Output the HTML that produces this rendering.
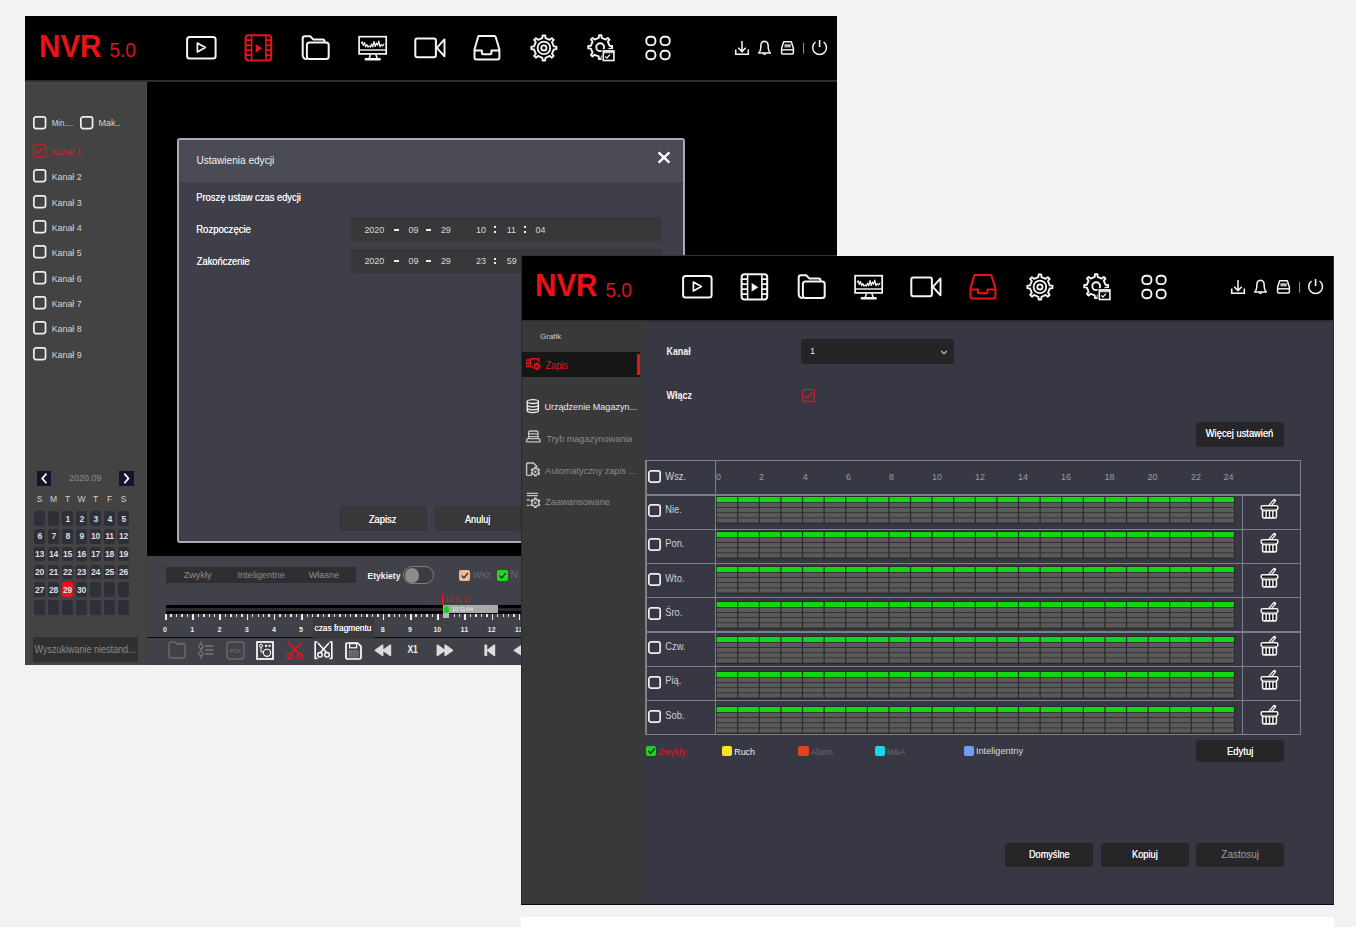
<!DOCTYPE html><html><head><meta charset="utf-8"><style>
*{margin:0;padding:0;box-sizing:border-box}
html,body{width:1356px;height:927px;overflow:hidden;background:#f2f2f2;font-family:"Liberation Sans",sans-serif}
.abs{position:absolute}
.t{position:absolute;white-space:nowrap;line-height:1}
svg{position:absolute;overflow:visible}
</style></head><body>
<div class="abs" style="left:25.00px;top:16.00px;width:812.00px;height:649.00px;background:#000;"></div>
<div class="abs" style="left:25.00px;top:16.00px;width:812.00px;height:64.00px;background:#000;"></div>
<div class="abs" style="left:25.00px;top:80.30px;width:812.00px;height:1.60px;background:#2c2c2c;"></div>
<div class="t" style="left:38.60px;top:29.81px;font-size:32.00px;color:#ec1018;font-weight:bold;transform:scale(0.925,1.0);transform-origin:0 27.09px;letter-spacing:0px">NVR</div>
<div class="t" style="left:109.40px;top:41.30px;font-size:19.14px;color:#d41820;font-weight:normal;transform:scale(1.0,1.03);transform-origin:0 16.20px;">5.0</div>
<svg style="left:25px;top:16.0px" width="813" height="64" viewBox="25 16 813 64"><rect x="187.1" y="37" width="28.5" height="21.6" rx="2.5" fill="none" stroke="#f6f6f6" stroke-width="2"/><path d="M197.4 43.1 L205.3 47.6 L197.4 52.0 Z" fill="none" stroke="#f6f6f6" stroke-width="1.7" stroke-linejoin="round"/><rect x="245.6" y="35.2" width="25.6" height="25.3" rx="3" fill="none" stroke="#e8141c" stroke-width="2"/><path d="M251.6 35.2 V60.5 M265.9 35.2 V60.5" stroke="#e8141c" stroke-width="1.6"/><path d="M245.6 40.1 H251.6 M265.9 40.1 H271.2" stroke="#e8141c" stroke-width="1.6"/><path d="M245.6 45.1 H251.6 M265.9 45.1 H271.2" stroke="#e8141c" stroke-width="1.6"/><path d="M245.6 50.1 H251.6 M265.9 50.1 H271.2" stroke="#e8141c" stroke-width="1.6"/><path d="M245.6 55.1 H251.6 M265.9 55.1 H271.2" stroke="#e8141c" stroke-width="1.6"/><path d="M255.6 43.9 L262.3 48.3 L255.6 52.8 Z" fill="#e8141c"/><path d="M306.9 59.1 Q302.7 59.1 302.7 55 V38.6 Q302.7 36.3 305 36.3 H310.2 L313.2 39.4 H322.4 Q324.6 39.4 324.6 41.5 V42.6" fill="none" stroke="#f6f6f6" stroke-width="2" stroke-linejoin="round"/><rect x="306.9" y="42.6" width="21.8" height="16.5" rx="2.5" fill="none" stroke="#f6f6f6" stroke-width="2"/><rect x="359.1" y="36.7" width="27.1" height="17.2" fill="none" stroke="#f6f6f6" stroke-width="1.7"/><path d="M359.1 50 H386.2" stroke="#f6f6f6" stroke-width="1.4"/><path d="M370.6 54.5 L369.2 58.3 M375.8 54.5 L377.2 58.3" stroke="#f6f6f6" stroke-width="1.5"/><rect x="364.6" y="58" width="16.2" height="2.6" rx="1.3" fill="#f6f6f6"/><path d="M361 43.5 L362.3 41.8 L363.3 45.5 L364.5 42.5 L365.6 46.8 L366.8 44.5 L368 47.2 L369.3 45.8 L370.5 47 L371.6 44 L372.8 46.8 L374 41.5 L375.2 46.5 L376.5 43 L377.6 45.3 L378.8 41 L380 46.8 L381.2 44.5 L382.4 46 L384.2 43.8" fill="none" stroke="#f6f6f6" stroke-width="1.2" stroke-linejoin="round"/><rect x="415.3" y="38.4" width="20.6" height="18.9" rx="2" fill="none" stroke="#f6f6f6" stroke-width="2"/><path d="M436.8 47.8 L444.5 39.4 V56.3 Z" fill="none" stroke="#f6f6f6" stroke-width="1.9" stroke-linejoin="round"/><path d="M478.4 36 H494.4 Q495.4 36 495.7 37 L499.4 49.5 V57.4 Q499.4 59.4 497.4 59.4 H476.5 Q474.5 59.4 474.5 57.4 V49.5 L478.1 37 Q478.4 36 479.4 36 Z" fill="none" stroke="#f6f6f6" stroke-width="2" stroke-linejoin="round"/><path d="M474.5 50.4 H481.9 V53.2 Q481.9 54.3 483 54.3 H490.3 Q491.4 54.3 491.4 53.2 V50.4 H499.4" fill="none" stroke="#f6f6f6" stroke-width="2" stroke-linejoin="round"/><path d="M542.34 38.02 L542.62 35.37 L545.18 35.37 L545.46 38.02 L549.78 39.81 L551.86 38.13 L553.67 39.94 L551.99 42.02 L553.78 46.34 L556.43 46.62 L556.43 49.18 L553.78 49.46 L551.99 53.78 L553.67 55.86 L551.86 57.67 L549.78 55.99 L545.46 57.78 L545.18 60.43 L542.62 60.43 L542.34 57.78 L538.02 55.99 L535.94 57.67 L534.13 55.86 L535.81 53.78 L534.02 49.46 L531.37 49.18 L531.37 46.62 L534.02 46.34 L535.81 42.02 L534.13 39.94 L535.94 38.13 L538.02 39.81 Z" fill="none" stroke="#f6f6f6" stroke-width="1.9" stroke-linejoin="round"/><circle cx="543.9" cy="47.9" r="6.3" fill="none" stroke="#f6f6f6" stroke-width="1.8"/><circle cx="543.9" cy="47.9" r="2.6" fill="none" stroke="#f6f6f6" stroke-width="1.8"/><path d="M598.73 37.92 L598.98 35.26 L601.42 35.26 L601.67 37.92 L605.73 39.60 L607.78 37.89 L609.51 39.62 L607.80 41.67 L609.48 45.73 L612.14 45.98 L612.14 48.42 L609.48 48.67 L607.80 52.73 L609.51 54.78 L607.78 56.51 L605.73 54.80 L601.67 56.48 L601.42 59.14 L598.98 59.14 L598.73 56.48 L594.67 54.80 L592.62 56.51 L590.89 54.78 L592.60 52.73 L590.92 48.67 L588.26 48.42 L588.26 45.98 L590.92 45.73 L592.60 41.67 L590.89 39.62 L592.62 37.89 L594.67 39.60 Z" fill="none" stroke="#f6f6f6" stroke-width="1.9" stroke-linejoin="round"/><circle cx="600.2" cy="47.2" r="3.9" fill="none" stroke="#f6f6f6" stroke-width="1.9"/><rect x="601.6" y="49.2" width="15" height="13" fill="#000"/><rect x="603.3" y="50.9" width="10.6" height="9.6" fill="none" stroke="#f6f6f6" stroke-width="1.6"/><rect x="603.3" y="50.9" width="10.6" height="2.4" fill="#f6f6f6" opacity="0.8"/><path d="M605.3 56.3 L606.9 58.0 L610.0 54.6" fill="none" stroke="#f6f6f6" stroke-width="1.2"/><rect x="646.3" y="36.7" width="9.1" height="8.4" rx="3.6" fill="none" stroke="#f6f6f6" stroke-width="1.9"/><rect x="646.3" y="50.8" width="9.1" height="8.4" rx="3.6" fill="none" stroke="#f6f6f6" stroke-width="1.9"/><rect x="660.6" y="36.7" width="9.1" height="8.4" rx="3.6" fill="none" stroke="#f6f6f6" stroke-width="1.9"/><rect x="660.6" y="50.8" width="9.1" height="8.4" rx="3.6" fill="none" stroke="#f6f6f6" stroke-width="1.9"/><path d="M742 41 V51.6 M738.2 47.8 L742 51.6 L745.8 47.8" fill="none" stroke="#f6f6f6" stroke-width="1.5"/><path d="M735.7 49.4 V54.2 H748.3 V49.4" fill="none" stroke="#f6f6f6" stroke-width="1.6"/><path d="M758.6 53 Q760.6 51.2 760.8 48 V46 Q761 41.4 764.5 41.3 Q768 41.4 768.2 46 V48 Q768.4 51.2 770.4 53 Z" fill="none" stroke="#f6f6f6" stroke-width="1.5" stroke-linejoin="round"/><path d="M763 53.4 Q764.5 55.4 766 53.4" fill="none" stroke="#f6f6f6" stroke-width="1.3"/><path d="M783.7 41.8 H791.3 L793.4 48.2 V53 Q793.4 54 792.4 54 H782.6 Q781.6 54 781.6 53 V48.2 Z" fill="none" stroke="#f6f6f6" stroke-width="1.5" stroke-linejoin="round"/><path d="M781.6 49.8 H793.4" stroke="#f6f6f6" stroke-width="1.4"/><rect x="784.4" y="44.2" width="6.4" height="3.2" fill="#bbb"/><path d="M803.6 42.8 V53.7" stroke="#9a9a9a" stroke-width="1"/><path d="M815.6 42.0 A6.9 6.9 0 1 0 823.6 42.0" fill="none" stroke="#f6f6f6" stroke-width="1.5"/><path d="M819.6 40.0 V47" stroke="#f6f6f6" stroke-width="1.6"/></svg>
<div class="abs" style="left:25.00px;top:81.80px;width:122.00px;height:583.20px;background:#434343;"></div>
<div class="abs" style="left:25.00px;top:81.80px;width:122.00px;height:1.00px;background:#4e4e4e;"></div>
<div class="abs" style="left:145.80px;top:81.80px;width:1.20px;height:474.00px;background:#4c4c4c;"></div>
<svg style="left:33.20px;top:115.60px" width="13.4" height="13.4" viewBox="0 0 13.4 13.4"><rect x="0.85" y="0.85" width="11.70" height="11.70" rx="2.2" fill="none" stroke="#f0f0f0" stroke-width="1.7"/></svg>
<div class="t" style="left:51.70px;top:119.95px;font-size:7.86px;color:#d4d4d4;font-weight:normal;transform:scale(1.0,1.04);transform-origin:0 6.65px;">Min....</div>
<svg style="left:80.00px;top:115.60px" width="13.4" height="13.4" viewBox="0 0 13.4 13.4"><rect x="0.85" y="0.85" width="11.70" height="11.70" rx="2.2" fill="none" stroke="#f0f0f0" stroke-width="1.7"/></svg>
<div class="t" style="left:98.60px;top:118.98px;font-size:9.00px;color:#d4d4d4;font-weight:normal;transform:scale(1.0,1.04);transform-origin:0 7.62px;">Mak..</div>
<svg style="left:33.20px;top:144.00px" width="13.4" height="13.4" viewBox="0 0 13.4 13.4"><rect x="0.65" y="0.65" width="12.10" height="12.10" rx="2.2" fill="none" stroke="#b82530" stroke-width="1.3"/><path d="M2.95 6.43 L5.76 9.11 L10.72 3.48" fill="none" stroke="#e8141c" stroke-width="1.3"/></svg>
<div class="t" style="left:51.70px;top:147.91px;font-size:8.85px;color:#d8202a;font-weight:normal;transform:scale(1.0,1.04);transform-origin:0 7.49px;">Kanał 1</div>
<svg style="left:33.20px;top:169.35px" width="13.4" height="13.4" viewBox="0 0 13.4 13.4"><rect x="0.85" y="0.85" width="11.70" height="11.70" rx="2.2" fill="none" stroke="#f0f0f0" stroke-width="1.7"/></svg>
<div class="t" style="left:51.70px;top:173.26px;font-size:8.85px;color:#d4d4d4;font-weight:normal;transform:scale(1.0,1.04);transform-origin:0 7.49px;">Kanał 2</div>
<svg style="left:33.20px;top:194.70px" width="13.4" height="13.4" viewBox="0 0 13.4 13.4"><rect x="0.85" y="0.85" width="11.70" height="11.70" rx="2.2" fill="none" stroke="#f0f0f0" stroke-width="1.7"/></svg>
<div class="t" style="left:51.70px;top:198.61px;font-size:8.85px;color:#d4d4d4;font-weight:normal;transform:scale(1.0,1.04);transform-origin:0 7.49px;">Kanał 3</div>
<svg style="left:33.20px;top:220.05px" width="13.4" height="13.4" viewBox="0 0 13.4 13.4"><rect x="0.85" y="0.85" width="11.70" height="11.70" rx="2.2" fill="none" stroke="#f0f0f0" stroke-width="1.7"/></svg>
<div class="t" style="left:51.70px;top:223.96px;font-size:8.85px;color:#d4d4d4;font-weight:normal;transform:scale(1.0,1.04);transform-origin:0 7.49px;">Kanał 4</div>
<svg style="left:33.20px;top:245.40px" width="13.4" height="13.4" viewBox="0 0 13.4 13.4"><rect x="0.85" y="0.85" width="11.70" height="11.70" rx="2.2" fill="none" stroke="#f0f0f0" stroke-width="1.7"/></svg>
<div class="t" style="left:51.70px;top:249.31px;font-size:8.85px;color:#d4d4d4;font-weight:normal;transform:scale(1.0,1.04);transform-origin:0 7.49px;">Kanał 5</div>
<svg style="left:33.20px;top:270.75px" width="13.4" height="13.4" viewBox="0 0 13.4 13.4"><rect x="0.85" y="0.85" width="11.70" height="11.70" rx="2.2" fill="none" stroke="#f0f0f0" stroke-width="1.7"/></svg>
<div class="t" style="left:51.70px;top:274.66px;font-size:8.85px;color:#d4d4d4;font-weight:normal;transform:scale(1.0,1.04);transform-origin:0 7.49px;">Kanał 6</div>
<svg style="left:33.20px;top:296.10px" width="13.4" height="13.4" viewBox="0 0 13.4 13.4"><rect x="0.85" y="0.85" width="11.70" height="11.70" rx="2.2" fill="none" stroke="#f0f0f0" stroke-width="1.7"/></svg>
<div class="t" style="left:51.70px;top:300.01px;font-size:8.85px;color:#d4d4d4;font-weight:normal;transform:scale(1.0,1.04);transform-origin:0 7.49px;">Kanał 7</div>
<svg style="left:33.20px;top:321.45px" width="13.4" height="13.4" viewBox="0 0 13.4 13.4"><rect x="0.85" y="0.85" width="11.70" height="11.70" rx="2.2" fill="none" stroke="#f0f0f0" stroke-width="1.7"/></svg>
<div class="t" style="left:51.70px;top:325.36px;font-size:8.85px;color:#d4d4d4;font-weight:normal;transform:scale(1.0,1.04);transform-origin:0 7.49px;">Kanał 8</div>
<svg style="left:33.20px;top:346.80px" width="13.4" height="13.4" viewBox="0 0 13.4 13.4"><rect x="0.85" y="0.85" width="11.70" height="11.70" rx="2.2" fill="none" stroke="#f0f0f0" stroke-width="1.7"/></svg>
<div class="t" style="left:51.70px;top:350.71px;font-size:8.85px;color:#d4d4d4;font-weight:normal;transform:scale(1.0,1.04);transform-origin:0 7.49px;">Kanał 9</div>
<div class="abs" style="left:36.70px;top:471.20px;width:14.70px;height:14.70px;background:#14142a;"></div>
<svg style="left:36.70px;top:471.20px" width="15" height="15" viewBox="0 0 15 15"><path d="M9.4 2.6 L5.2 7.4 L9.4 12.2" fill="none" stroke="#fff" stroke-width="1.7"/></svg>
<div class="abs" style="left:119.10px;top:471.20px;width:14.70px;height:14.70px;background:#14142a;"></div>
<svg style="left:119.10px;top:471.20px" width="15" height="15" viewBox="0 0 15 15"><path d="M5.3 2.6 L9.5 7.4 L5.3 12.2" fill="none" stroke="#fff" stroke-width="1.7"/></svg>
<div class="t" style="left:69.04px;top:473.98px;font-size:9.00px;color:#8a8a8a;font-weight:normal;">2020.09</div>
<div class="t" style="left:36.77px;top:495.30px;font-size:8.50px;color:#cfcfcf;font-weight:normal;">S</div>
<div class="t" style="left:50.06px;top:495.30px;font-size:8.50px;color:#cfcfcf;font-weight:normal;">M</div>
<div class="t" style="left:65.00px;top:495.30px;font-size:8.50px;color:#cfcfcf;font-weight:normal;">T</div>
<div class="t" style="left:77.59px;top:495.30px;font-size:8.50px;color:#cfcfcf;font-weight:normal;">W</div>
<div class="t" style="left:93.00px;top:495.30px;font-size:8.50px;color:#cfcfcf;font-weight:normal;">T</div>
<div class="t" style="left:107.00px;top:495.30px;font-size:8.50px;color:#cfcfcf;font-weight:normal;">F</div>
<div class="t" style="left:120.77px;top:495.30px;font-size:8.50px;color:#cfcfcf;font-weight:normal;">S</div>
<div class="abs" style="left:34.40px;top:511.40px;width:10.80px;height:14.40px;background:#2e2f38;border-radius:2.5px"></div>
<div class="abs" style="left:48.40px;top:511.40px;width:10.80px;height:14.40px;background:#2e2f38;border-radius:2.5px"></div>
<div class="abs" style="left:62.40px;top:511.40px;width:10.80px;height:14.40px;background:#2e2f38;border-radius:2.5px"></div>
<div class="t" style="left:65.41px;top:514.62px;font-size:8.60px;color:#dedede;font-weight:bold;transform:scale(1.0,1.1);transform-origin:0 7.28px;letter-spacing:-0.3px">1</div>
<div class="abs" style="left:76.40px;top:511.40px;width:10.80px;height:14.40px;background:#2e2f38;border-radius:2.5px"></div>
<div class="t" style="left:79.41px;top:514.62px;font-size:8.60px;color:#dedede;font-weight:bold;transform:scale(1.0,1.1);transform-origin:0 7.28px;letter-spacing:-0.3px">2</div>
<div class="abs" style="left:90.40px;top:511.40px;width:10.80px;height:14.40px;background:#2e2f38;border-radius:2.5px"></div>
<div class="t" style="left:93.41px;top:514.62px;font-size:8.60px;color:#dedede;font-weight:bold;transform:scale(1.0,1.1);transform-origin:0 7.28px;letter-spacing:-0.3px">3</div>
<div class="abs" style="left:104.40px;top:511.40px;width:10.80px;height:14.40px;background:#2e2f38;border-radius:2.5px"></div>
<div class="t" style="left:107.41px;top:514.62px;font-size:8.60px;color:#dedede;font-weight:bold;transform:scale(1.0,1.1);transform-origin:0 7.28px;letter-spacing:-0.3px">4</div>
<div class="abs" style="left:118.40px;top:511.40px;width:10.80px;height:14.40px;background:#2e2f38;border-radius:2.5px"></div>
<div class="t" style="left:121.41px;top:514.62px;font-size:8.60px;color:#dedede;font-weight:bold;transform:scale(1.0,1.1);transform-origin:0 7.28px;letter-spacing:-0.3px">5</div>
<div class="abs" style="left:34.40px;top:529.15px;width:10.80px;height:14.40px;background:#2e2f38;border-radius:2.5px"></div>
<div class="t" style="left:37.41px;top:532.37px;font-size:8.60px;color:#dedede;font-weight:bold;transform:scale(1.0,1.1);transform-origin:0 7.28px;letter-spacing:-0.3px">6</div>
<div class="abs" style="left:48.40px;top:529.15px;width:10.80px;height:14.40px;background:#2e2f38;border-radius:2.5px"></div>
<div class="t" style="left:51.41px;top:532.37px;font-size:8.60px;color:#dedede;font-weight:bold;transform:scale(1.0,1.1);transform-origin:0 7.28px;letter-spacing:-0.3px">7</div>
<div class="abs" style="left:62.40px;top:529.15px;width:10.80px;height:14.40px;background:#2e2f38;border-radius:2.5px"></div>
<div class="t" style="left:65.41px;top:532.37px;font-size:8.60px;color:#dedede;font-weight:bold;transform:scale(1.0,1.1);transform-origin:0 7.28px;letter-spacing:-0.3px">8</div>
<div class="abs" style="left:76.40px;top:529.15px;width:10.80px;height:14.40px;background:#2e2f38;border-radius:2.5px"></div>
<div class="t" style="left:79.41px;top:532.37px;font-size:8.60px;color:#dedede;font-weight:bold;transform:scale(1.0,1.1);transform-origin:0 7.28px;letter-spacing:-0.3px">9</div>
<div class="abs" style="left:90.40px;top:529.15px;width:10.80px;height:14.40px;background:#2e2f38;border-radius:2.5px"></div>
<div class="t" style="left:91.02px;top:532.37px;font-size:8.60px;color:#dedede;font-weight:bold;transform:scale(1.0,1.1);transform-origin:0 7.28px;letter-spacing:-0.3px">10</div>
<div class="abs" style="left:104.40px;top:529.15px;width:10.80px;height:14.40px;background:#2e2f38;border-radius:2.5px"></div>
<div class="t" style="left:105.25px;top:532.37px;font-size:8.60px;color:#dedede;font-weight:bold;transform:scale(1.0,1.1);transform-origin:0 7.28px;letter-spacing:-0.3px">11</div>
<div class="abs" style="left:118.40px;top:529.15px;width:10.80px;height:14.40px;background:#2e2f38;border-radius:2.5px"></div>
<div class="t" style="left:119.02px;top:532.37px;font-size:8.60px;color:#dedede;font-weight:bold;transform:scale(1.0,1.1);transform-origin:0 7.28px;letter-spacing:-0.3px">12</div>
<div class="abs" style="left:34.40px;top:546.90px;width:10.80px;height:14.40px;background:#2e2f38;border-radius:2.5px"></div>
<div class="t" style="left:35.02px;top:550.12px;font-size:8.60px;color:#dedede;font-weight:bold;transform:scale(1.0,1.1);transform-origin:0 7.28px;letter-spacing:-0.3px">13</div>
<div class="abs" style="left:48.40px;top:546.90px;width:10.80px;height:14.40px;background:#2e2f38;border-radius:2.5px"></div>
<div class="t" style="left:49.02px;top:550.12px;font-size:8.60px;color:#dedede;font-weight:bold;transform:scale(1.0,1.1);transform-origin:0 7.28px;letter-spacing:-0.3px">14</div>
<div class="abs" style="left:62.40px;top:546.90px;width:10.80px;height:14.40px;background:#2e2f38;border-radius:2.5px"></div>
<div class="t" style="left:63.02px;top:550.12px;font-size:8.60px;color:#dedede;font-weight:bold;transform:scale(1.0,1.1);transform-origin:0 7.28px;letter-spacing:-0.3px">15</div>
<div class="abs" style="left:76.40px;top:546.90px;width:10.80px;height:14.40px;background:#2e2f38;border-radius:2.5px"></div>
<div class="t" style="left:77.02px;top:550.12px;font-size:8.60px;color:#dedede;font-weight:bold;transform:scale(1.0,1.1);transform-origin:0 7.28px;letter-spacing:-0.3px">16</div>
<div class="abs" style="left:90.40px;top:546.90px;width:10.80px;height:14.40px;background:#2e2f38;border-radius:2.5px"></div>
<div class="t" style="left:91.02px;top:550.12px;font-size:8.60px;color:#dedede;font-weight:bold;transform:scale(1.0,1.1);transform-origin:0 7.28px;letter-spacing:-0.3px">17</div>
<div class="abs" style="left:104.40px;top:546.90px;width:10.80px;height:14.40px;background:#2e2f38;border-radius:2.5px"></div>
<div class="t" style="left:105.02px;top:550.12px;font-size:8.60px;color:#dedede;font-weight:bold;transform:scale(1.0,1.1);transform-origin:0 7.28px;letter-spacing:-0.3px">18</div>
<div class="abs" style="left:118.40px;top:546.90px;width:10.80px;height:14.40px;background:#2e2f38;border-radius:2.5px"></div>
<div class="t" style="left:119.02px;top:550.12px;font-size:8.60px;color:#dedede;font-weight:bold;transform:scale(1.0,1.1);transform-origin:0 7.28px;letter-spacing:-0.3px">19</div>
<div class="abs" style="left:34.40px;top:564.65px;width:10.80px;height:14.40px;background:#2e2f38;border-radius:2.5px"></div>
<div class="t" style="left:35.02px;top:567.87px;font-size:8.60px;color:#dedede;font-weight:bold;transform:scale(1.0,1.1);transform-origin:0 7.28px;letter-spacing:-0.3px">20</div>
<div class="abs" style="left:48.40px;top:564.65px;width:10.80px;height:14.40px;background:#2e2f38;border-radius:2.5px"></div>
<div class="t" style="left:49.02px;top:567.87px;font-size:8.60px;color:#dedede;font-weight:bold;transform:scale(1.0,1.1);transform-origin:0 7.28px;letter-spacing:-0.3px">21</div>
<div class="abs" style="left:62.40px;top:564.65px;width:10.80px;height:14.40px;background:#2e2f38;border-radius:2.5px"></div>
<div class="t" style="left:63.02px;top:567.87px;font-size:8.60px;color:#dedede;font-weight:bold;transform:scale(1.0,1.1);transform-origin:0 7.28px;letter-spacing:-0.3px">22</div>
<div class="abs" style="left:76.40px;top:564.65px;width:10.80px;height:14.40px;background:#2e2f38;border-radius:2.5px"></div>
<div class="t" style="left:77.02px;top:567.87px;font-size:8.60px;color:#dedede;font-weight:bold;transform:scale(1.0,1.1);transform-origin:0 7.28px;letter-spacing:-0.3px">23</div>
<div class="abs" style="left:90.40px;top:564.65px;width:10.80px;height:14.40px;background:#2e2f38;border-radius:2.5px"></div>
<div class="t" style="left:91.02px;top:567.87px;font-size:8.60px;color:#dedede;font-weight:bold;transform:scale(1.0,1.1);transform-origin:0 7.28px;letter-spacing:-0.3px">24</div>
<div class="abs" style="left:104.40px;top:564.65px;width:10.80px;height:14.40px;background:#2e2f38;border-radius:2.5px"></div>
<div class="t" style="left:105.02px;top:567.87px;font-size:8.60px;color:#dedede;font-weight:bold;transform:scale(1.0,1.1);transform-origin:0 7.28px;letter-spacing:-0.3px">25</div>
<div class="abs" style="left:118.40px;top:564.65px;width:10.80px;height:14.40px;background:#2e2f38;border-radius:2.5px"></div>
<div class="t" style="left:119.02px;top:567.87px;font-size:8.60px;color:#dedede;font-weight:bold;transform:scale(1.0,1.1);transform-origin:0 7.28px;letter-spacing:-0.3px">26</div>
<div class="abs" style="left:34.40px;top:582.40px;width:10.80px;height:14.40px;background:#2e2f38;border-radius:2.5px"></div>
<div class="t" style="left:35.02px;top:585.62px;font-size:8.60px;color:#dedede;font-weight:bold;transform:scale(1.0,1.1);transform-origin:0 7.28px;letter-spacing:-0.3px">27</div>
<div class="abs" style="left:48.40px;top:582.40px;width:10.80px;height:14.40px;background:#2e2f38;border-radius:2.5px"></div>
<div class="t" style="left:49.02px;top:585.62px;font-size:8.60px;color:#dedede;font-weight:bold;transform:scale(1.0,1.1);transform-origin:0 7.28px;letter-spacing:-0.3px">28</div>
<div class="abs" style="left:62.40px;top:582.40px;width:10.80px;height:14.40px;background:#e8141c;border-radius:2.5px"></div>
<div class="t" style="left:63.02px;top:585.62px;font-size:8.60px;color:#dedede;font-weight:bold;transform:scale(1.0,1.1);transform-origin:0 7.28px;letter-spacing:-0.3px">29</div>
<div class="abs" style="left:76.40px;top:582.40px;width:10.80px;height:14.40px;background:#2e2f38;border-radius:2.5px"></div>
<div class="t" style="left:77.02px;top:585.62px;font-size:8.60px;color:#dedede;font-weight:bold;transform:scale(1.0,1.1);transform-origin:0 7.28px;letter-spacing:-0.3px">30</div>
<div class="abs" style="left:90.40px;top:582.40px;width:10.80px;height:14.40px;background:#2e2f38;border-radius:2.5px"></div>
<div class="abs" style="left:104.40px;top:582.40px;width:10.80px;height:14.40px;background:#2e2f38;border-radius:2.5px"></div>
<div class="abs" style="left:118.40px;top:582.40px;width:10.80px;height:14.40px;background:#2e2f38;border-radius:2.5px"></div>
<div class="abs" style="left:34.40px;top:600.15px;width:10.80px;height:14.40px;background:#2e2f38;border-radius:2.5px"></div>
<div class="abs" style="left:48.40px;top:600.15px;width:10.80px;height:14.40px;background:#2e2f38;border-radius:2.5px"></div>
<div class="abs" style="left:62.40px;top:600.15px;width:10.80px;height:14.40px;background:#2e2f38;border-radius:2.5px"></div>
<div class="abs" style="left:76.40px;top:600.15px;width:10.80px;height:14.40px;background:#2e2f38;border-radius:2.5px"></div>
<div class="abs" style="left:90.40px;top:600.15px;width:10.80px;height:14.40px;background:#2e2f38;border-radius:2.5px"></div>
<div class="abs" style="left:104.40px;top:600.15px;width:10.80px;height:14.40px;background:#2e2f38;border-radius:2.5px"></div>
<div class="abs" style="left:118.40px;top:600.15px;width:10.80px;height:14.40px;background:#2e2f38;border-radius:2.5px"></div>
<div class="abs" style="left:32.80px;top:636.70px;width:105.40px;height:25.00px;background:#303030;"></div>
<div class="t" style="left:34.50px;top:646.48px;font-size:9.00px;color:#8a8a8a;font-weight:normal;transform:scale(1.0,1.2);transform-origin:0 7.62px;">Wyszukiwanie niestand...</div>
<div class="abs" style="left:147.00px;top:556.00px;width:690.00px;height:109.00px;background:#414249;"></div>
<div class="abs" style="left:177.4px;top:138.4px;width:507.4px;height:404.6px;background:#3f3f49;border:2px solid #a6acb1;border-radius:3px"></div>
<div class="abs" style="left:179.20px;top:140.20px;width:503.80px;height:42.30px;background:#4a4b54;"></div>
<div class="t" style="left:196.40px;top:156.08px;font-size:10.07px;color:#f2f2f2;font-weight:normal;transform:scale(1.0,1.12);transform-origin:0 8.52px;">Ustawienia edycji</div>
<svg style="left:656.50px;top:151.00px" width="14" height="13" viewBox="0 0 14 13"><path d="M1.6 1.4 L12.4 11.6 M12.4 1.4 L1.6 11.6" stroke="#fff" stroke-width="2.4"/></svg>
<div class="t" style="left:196.20px;top:193.44px;font-size:9.40px;color:#f2f2f2;font-weight:normal;transform:scale(1.0,1.1);transform-origin:0 7.96px;text-shadow:0 0 0.5px #fff">Proszę ustaw czas edycji</div>
<div class="t" style="left:196.20px;top:225.20px;font-size:9.57px;color:#f2f2f2;font-weight:normal;transform:scale(1.0,1.1);transform-origin:0 8.10px;text-shadow:0 0 0.5px #fff">Rozpoczęcie</div>
<div class="t" style="left:196.80px;top:257.69px;font-size:9.35px;color:#f2f2f2;font-weight:normal;transform:scale(1.0,1.1);transform-origin:0 7.91px;text-shadow:0 0 0.5px #fff">Zakończenie</div>
<div class="abs" style="left:351.00px;top:217.30px;width:311.00px;height:24.60px;background:#38383b;border-radius:3px"></div>
<div class="t" style="left:364.40px;top:225.52px;font-size:8.95px;color:#d8d8d8;font-weight:normal;">2020</div>
<div class="abs" style="left:393.80px;top:229.00px;width:5.60px;height:2.00px;background:#ececec;"></div>
<div class="t" style="left:408.50px;top:225.52px;font-size:8.95px;color:#d8d8d8;font-weight:normal;">09</div>
<div class="abs" style="left:425.50px;top:229.00px;width:5.60px;height:2.00px;background:#ececec;"></div>
<div class="t" style="left:440.90px;top:225.52px;font-size:8.95px;color:#d8d8d8;font-weight:normal;">29</div>
<div class="t" style="left:476.00px;top:225.52px;font-size:8.95px;color:#d8d8d8;font-weight:normal;">10</div>
<div class="abs" style="left:494.00px;top:226.00px;width:2.00px;height:2.00px;background:#ececec;"></div>
<div class="abs" style="left:494.00px;top:231.00px;width:2.00px;height:2.00px;background:#ececec;"></div>
<div class="t" style="left:506.70px;top:225.52px;font-size:8.95px;color:#d8d8d8;font-weight:normal;">11</div>
<div class="abs" style="left:523.60px;top:226.00px;width:2.00px;height:2.00px;background:#ececec;"></div>
<div class="abs" style="left:523.60px;top:231.00px;width:2.00px;height:2.00px;background:#ececec;"></div>
<div class="t" style="left:535.60px;top:225.52px;font-size:8.95px;color:#d8d8d8;font-weight:normal;">04</div>
<div class="abs" style="left:351.00px;top:248.60px;width:311.00px;height:24.60px;background:#38383b;border-radius:3px"></div>
<div class="t" style="left:364.40px;top:257.22px;font-size:8.95px;color:#d8d8d8;font-weight:normal;">2020</div>
<div class="abs" style="left:393.80px;top:260.00px;width:5.60px;height:2.00px;background:#ececec;"></div>
<div class="t" style="left:408.50px;top:257.22px;font-size:8.95px;color:#d8d8d8;font-weight:normal;">09</div>
<div class="abs" style="left:425.50px;top:260.00px;width:5.60px;height:2.00px;background:#ececec;"></div>
<div class="t" style="left:440.90px;top:257.22px;font-size:8.95px;color:#d8d8d8;font-weight:normal;">29</div>
<div class="t" style="left:476.00px;top:257.22px;font-size:8.95px;color:#d8d8d8;font-weight:normal;">23</div>
<div class="abs" style="left:494.00px;top:258.00px;width:2.00px;height:2.00px;background:#ececec;"></div>
<div class="abs" style="left:494.00px;top:262.00px;width:2.00px;height:2.00px;background:#ececec;"></div>
<div class="t" style="left:506.70px;top:257.22px;font-size:8.95px;color:#d8d8d8;font-weight:normal;">59</div>
<div class="abs" style="left:523.60px;top:258.00px;width:2.00px;height:2.00px;background:#ececec;"></div>
<div class="abs" style="left:523.60px;top:262.00px;width:2.00px;height:2.00px;background:#ececec;"></div>
<div class="t" style="left:535.60px;top:257.22px;font-size:8.95px;color:#d8d8d8;font-weight:normal;">59</div>
<div class="abs" style="left:338.70px;top:506.00px;width:88.10px;height:24.70px;background:#38383a;border-radius:3px"></div>
<div class="t" style="left:368.90px;top:515.67px;font-size:9.37px;color:#f2f2f2;font-weight:normal;transform:scale(1.0,1.1);transform-origin:0 7.93px;text-shadow:0 0 0.5px #fff">Zapisz</div>
<div class="abs" style="left:433.70px;top:506.00px;width:88.10px;height:24.70px;background:#38383a;border-radius:3px"></div>
<div class="t" style="left:465.00px;top:515.86px;font-size:9.14px;color:#f2f2f2;font-weight:normal;transform:scale(1.0,1.1);transform-origin:0 7.74px;text-shadow:0 0 0.5px #fff">Anuluj</div>
<div class="abs" style="left:166.20px;top:567.20px;width:189.50px;height:15.50px;background:#2f2f33;"></div>
<div class="t" style="left:183.70px;top:570.97px;font-size:9.13px;color:#8c8c8c;font-weight:normal;transform:scale(1.0,1.08);transform-origin:0 7.73px;">Zwykły</div>
<div class="t" style="left:237.40px;top:570.92px;font-size:9.19px;color:#8c8c8c;font-weight:normal;transform:scale(1.0,1.08);transform-origin:0 7.78px;">Inteligentne</div>
<div class="t" style="left:308.70px;top:570.96px;font-size:9.15px;color:#8c8c8c;font-weight:normal;transform:scale(1.0,1.08);transform-origin:0 7.74px;">Własne</div>
<div class="t" style="left:367.50px;top:571.72px;font-size:8.60px;color:#f4f4f4;font-weight:bold;transform:scale(1.0,1.15);transform-origin:0 7.28px;">Etykiety</div>
<div class="abs" style="left:402.8px;top:566.4px;width:31.2px;height:17.8px;border:1.3px solid #808080;border-radius:9px;background:#3c3c42"></div>
<div class="abs" style="left:404.6px;top:568.2px;width:14.4px;height:14.4px;border-radius:50%;background:#8c8c8c"></div>
<div class="abs" style="left:459.00px;top:569.80px;width:11.20px;height:10.80px;background:#f0b896;border-radius:2px"></div>
<svg style="left:459.00px;top:569.80px" width="12" height="11" viewBox="0 0 12 11"><path d="M2.6 5.5 L4.9 7.8 L9 3" fill="none" stroke="#222" stroke-width="1.2"/></svg>
<div class="t" style="left:473.00px;top:571.15px;font-size:9.16px;color:#6a6a70;font-weight:normal;transform:scale(1.0,1.08);transform-origin:0 7.75px;">Wsz</div>
<div class="abs" style="left:497.20px;top:569.80px;width:10.80px;height:10.80px;background:#20d820;border-radius:2px"></div>
<svg style="left:497.20px;top:569.80px" width="11" height="11" viewBox="0 0 11 11"><path d="M2.4 5.5 L4.7 7.8 L8.8 3" fill="none" stroke="#222" stroke-width="1.2"/></svg>
<div class="t" style="left:510.50px;top:570.11px;font-size:10.39px;color:#6a6a70;font-weight:normal;transform:scale(1.0,1.08);transform-origin:0 8.79px;">N</div>
<div class="abs" style="left:166.00px;top:605.00px;width:355.00px;height:2.60px;background:#000;"></div>
<div class="abs" style="left:166.00px;top:607.60px;width:355.00px;height:3.00px;background:#2a2a2e;"></div>
<div class="abs" style="left:166.00px;top:610.50px;width:355.00px;height:3.00px;background:#050505;"></div>
<div class="abs" style="left:164.95px;top:613.80px;width:1.60px;height:6.00px;background:#ececec;"></div>
<div class="abs" style="left:170.44px;top:613.80px;width:1.40px;height:3.30px;background:#e4e4e4;"></div>
<div class="abs" style="left:175.89px;top:613.80px;width:1.40px;height:3.30px;background:#e4e4e4;"></div>
<div class="abs" style="left:181.33px;top:613.80px;width:1.40px;height:3.30px;background:#e4e4e4;"></div>
<div class="abs" style="left:186.78px;top:613.80px;width:1.40px;height:3.30px;background:#e4e4e4;"></div>
<div class="abs" style="left:192.17px;top:613.80px;width:1.60px;height:6.00px;background:#ececec;"></div>
<div class="abs" style="left:197.66px;top:613.80px;width:1.40px;height:3.30px;background:#e4e4e4;"></div>
<div class="abs" style="left:203.11px;top:613.80px;width:1.40px;height:3.30px;background:#e4e4e4;"></div>
<div class="abs" style="left:208.55px;top:613.80px;width:1.40px;height:3.30px;background:#e4e4e4;"></div>
<div class="abs" style="left:214.00px;top:613.80px;width:1.40px;height:3.30px;background:#e4e4e4;"></div>
<div class="abs" style="left:219.39px;top:613.80px;width:1.60px;height:6.00px;background:#ececec;"></div>
<div class="abs" style="left:224.88px;top:613.80px;width:1.40px;height:3.30px;background:#e4e4e4;"></div>
<div class="abs" style="left:230.33px;top:613.80px;width:1.40px;height:3.30px;background:#e4e4e4;"></div>
<div class="abs" style="left:235.77px;top:613.80px;width:1.40px;height:3.30px;background:#e4e4e4;"></div>
<div class="abs" style="left:241.22px;top:613.80px;width:1.40px;height:3.30px;background:#e4e4e4;"></div>
<div class="abs" style="left:246.61px;top:613.80px;width:1.60px;height:6.00px;background:#ececec;"></div>
<div class="abs" style="left:252.10px;top:613.80px;width:1.40px;height:3.30px;background:#e4e4e4;"></div>
<div class="abs" style="left:257.55px;top:613.80px;width:1.40px;height:3.30px;background:#e4e4e4;"></div>
<div class="abs" style="left:262.99px;top:613.80px;width:1.40px;height:3.30px;background:#e4e4e4;"></div>
<div class="abs" style="left:268.44px;top:613.80px;width:1.40px;height:3.30px;background:#e4e4e4;"></div>
<div class="abs" style="left:273.83px;top:613.80px;width:1.60px;height:6.00px;background:#ececec;"></div>
<div class="abs" style="left:279.32px;top:613.80px;width:1.40px;height:3.30px;background:#e4e4e4;"></div>
<div class="abs" style="left:284.77px;top:613.80px;width:1.40px;height:3.30px;background:#e4e4e4;"></div>
<div class="abs" style="left:290.21px;top:613.80px;width:1.40px;height:3.30px;background:#e4e4e4;"></div>
<div class="abs" style="left:295.66px;top:613.80px;width:1.40px;height:3.30px;background:#e4e4e4;"></div>
<div class="abs" style="left:301.05px;top:613.80px;width:1.60px;height:6.00px;background:#ececec;"></div>
<div class="abs" style="left:306.54px;top:613.80px;width:1.40px;height:3.30px;background:#e4e4e4;"></div>
<div class="abs" style="left:311.99px;top:613.80px;width:1.40px;height:3.30px;background:#e4e4e4;"></div>
<div class="abs" style="left:317.43px;top:613.80px;width:1.40px;height:3.30px;background:#e4e4e4;"></div>
<div class="abs" style="left:322.88px;top:613.80px;width:1.40px;height:3.30px;background:#e4e4e4;"></div>
<div class="abs" style="left:328.27px;top:613.80px;width:1.60px;height:6.00px;background:#ececec;"></div>
<div class="abs" style="left:333.76px;top:613.80px;width:1.40px;height:3.30px;background:#e4e4e4;"></div>
<div class="abs" style="left:339.21px;top:613.80px;width:1.40px;height:3.30px;background:#e4e4e4;"></div>
<div class="abs" style="left:344.65px;top:613.80px;width:1.40px;height:3.30px;background:#e4e4e4;"></div>
<div class="abs" style="left:350.10px;top:613.80px;width:1.40px;height:3.30px;background:#e4e4e4;"></div>
<div class="abs" style="left:355.49px;top:613.80px;width:1.60px;height:6.00px;background:#ececec;"></div>
<div class="abs" style="left:360.98px;top:613.80px;width:1.40px;height:3.30px;background:#e4e4e4;"></div>
<div class="abs" style="left:366.43px;top:613.80px;width:1.40px;height:3.30px;background:#e4e4e4;"></div>
<div class="abs" style="left:371.87px;top:613.80px;width:1.40px;height:3.30px;background:#e4e4e4;"></div>
<div class="abs" style="left:377.32px;top:613.80px;width:1.40px;height:3.30px;background:#e4e4e4;"></div>
<div class="abs" style="left:382.71px;top:613.80px;width:1.60px;height:6.00px;background:#ececec;"></div>
<div class="abs" style="left:388.20px;top:613.80px;width:1.40px;height:3.30px;background:#e4e4e4;"></div>
<div class="abs" style="left:393.65px;top:613.80px;width:1.40px;height:3.30px;background:#e4e4e4;"></div>
<div class="abs" style="left:399.09px;top:613.80px;width:1.40px;height:3.30px;background:#e4e4e4;"></div>
<div class="abs" style="left:404.54px;top:613.80px;width:1.40px;height:3.30px;background:#e4e4e4;"></div>
<div class="abs" style="left:409.93px;top:613.80px;width:1.60px;height:6.00px;background:#ececec;"></div>
<div class="abs" style="left:415.42px;top:613.80px;width:1.40px;height:3.30px;background:#e4e4e4;"></div>
<div class="abs" style="left:420.87px;top:613.80px;width:1.40px;height:3.30px;background:#e4e4e4;"></div>
<div class="abs" style="left:426.31px;top:613.80px;width:1.40px;height:3.30px;background:#e4e4e4;"></div>
<div class="abs" style="left:431.76px;top:613.80px;width:1.40px;height:3.30px;background:#e4e4e4;"></div>
<div class="abs" style="left:437.15px;top:613.80px;width:1.60px;height:6.00px;background:#ececec;"></div>
<div class="abs" style="left:442.64px;top:613.80px;width:1.40px;height:3.30px;background:#e4e4e4;"></div>
<div class="abs" style="left:448.09px;top:613.80px;width:1.40px;height:3.30px;background:#e4e4e4;"></div>
<div class="abs" style="left:453.53px;top:613.80px;width:1.40px;height:3.30px;background:#e4e4e4;"></div>
<div class="abs" style="left:458.98px;top:613.80px;width:1.40px;height:3.30px;background:#e4e4e4;"></div>
<div class="abs" style="left:464.37px;top:613.80px;width:1.60px;height:6.00px;background:#ececec;"></div>
<div class="abs" style="left:469.86px;top:613.80px;width:1.40px;height:3.30px;background:#e4e4e4;"></div>
<div class="abs" style="left:475.31px;top:613.80px;width:1.40px;height:3.30px;background:#e4e4e4;"></div>
<div class="abs" style="left:480.75px;top:613.80px;width:1.40px;height:3.30px;background:#e4e4e4;"></div>
<div class="abs" style="left:486.20px;top:613.80px;width:1.40px;height:3.30px;background:#e4e4e4;"></div>
<div class="abs" style="left:491.59px;top:613.80px;width:1.60px;height:6.00px;background:#ececec;"></div>
<div class="abs" style="left:497.08px;top:613.80px;width:1.40px;height:3.30px;background:#e4e4e4;"></div>
<div class="abs" style="left:502.53px;top:613.80px;width:1.40px;height:3.30px;background:#e4e4e4;"></div>
<div class="abs" style="left:507.97px;top:613.80px;width:1.40px;height:3.30px;background:#e4e4e4;"></div>
<div class="abs" style="left:513.42px;top:613.80px;width:1.40px;height:3.30px;background:#e4e4e4;"></div>
<div class="abs" style="left:518.81px;top:613.80px;width:1.60px;height:6.00px;background:#ececec;"></div>
<div class="t" style="left:163.00px;top:626.31px;font-size:7.19px;color:#ececec;font-weight:bold;transform:scale(1.0,1.12);transform-origin:0 6.09px;">0</div>
<div class="t" style="left:190.22px;top:626.31px;font-size:7.19px;color:#ececec;font-weight:bold;transform:scale(1.0,1.12);transform-origin:0 6.09px;">1</div>
<div class="t" style="left:217.44px;top:626.31px;font-size:7.19px;color:#ececec;font-weight:bold;transform:scale(1.0,1.12);transform-origin:0 6.09px;">2</div>
<div class="t" style="left:244.66px;top:626.31px;font-size:7.19px;color:#ececec;font-weight:bold;transform:scale(1.0,1.12);transform-origin:0 6.09px;">3</div>
<div class="t" style="left:271.88px;top:626.31px;font-size:7.19px;color:#ececec;font-weight:bold;transform:scale(1.0,1.12);transform-origin:0 6.09px;">4</div>
<div class="t" style="left:299.10px;top:626.31px;font-size:7.19px;color:#ececec;font-weight:bold;transform:scale(1.0,1.12);transform-origin:0 6.09px;">5</div>
<div class="t" style="left:326.32px;top:626.31px;font-size:7.19px;color:#ececec;font-weight:bold;transform:scale(1.0,1.12);transform-origin:0 6.09px;">6</div>
<div class="t" style="left:353.54px;top:626.31px;font-size:7.19px;color:#ececec;font-weight:bold;transform:scale(1.0,1.12);transform-origin:0 6.09px;">7</div>
<div class="t" style="left:380.76px;top:626.31px;font-size:7.19px;color:#ececec;font-weight:bold;transform:scale(1.0,1.12);transform-origin:0 6.09px;">8</div>
<div class="t" style="left:407.98px;top:626.31px;font-size:7.19px;color:#ececec;font-weight:bold;transform:scale(1.0,1.12);transform-origin:0 6.09px;">9</div>
<div class="t" style="left:433.40px;top:626.62px;font-size:6.83px;color:#ececec;font-weight:bold;transform:scale(1.0,1.12);transform-origin:0 5.78px;">10</div>
<div class="t" style="left:460.62px;top:626.31px;font-size:7.19px;color:#ececec;font-weight:bold;transform:scale(1.0,1.12);transform-origin:0 6.09px;">11</div>
<div class="t" style="left:487.84px;top:626.62px;font-size:6.83px;color:#ececec;font-weight:bold;transform:scale(1.0,1.12);transform-origin:0 5.78px;">12</div>
<div class="t" style="left:515.06px;top:626.62px;font-size:6.83px;color:#ececec;font-weight:bold;transform:scale(1.0,1.12);transform-origin:0 5.78px;">13</div>
<div class="abs" style="left:443.00px;top:605.00px;width:55.00px;height:8.20px;background:#a9a9a9;"></div>
<div class="abs" style="left:443.20px;top:613.00px;width:6.00px;height:5.00px;background:#b8b8b8;"></div>
<div class="abs" style="left:444.30px;top:605.60px;width:5.00px;height:7.00px;background:#1ece1e;border-radius:2px"></div>
<div class="t" style="left:451.70px;top:607.16px;font-size:5.61px;color:#f0f0f0;font-weight:normal;">10:11:04</div>
<div class="abs" style="left:442.20px;top:594.20px;width:1.80px;height:11.00px;background:#e8141c;"></div>
<div class="t" style="left:445.00px;top:596.76px;font-size:6.55px;color:#d8141c;font-weight:normal;">10:11:10</div>
<div class="abs" style="left:147.00px;top:636.60px;width:374.00px;height:1.60px;background:#0c0c0c;"></div>
<div class="abs" style="left:313.00px;top:617.30px;width:61.00px;height:21.50px;background:#3a3a3c;"></div>
<div class="t" style="left:314.50px;top:623.94px;font-size:8.34px;color:#f4f4f4;font-weight:normal;transform:scale(1.0,1.1);transform-origin:0 7.06px;text-shadow:0 0 0.5px #fff">czas fragmentu</div>
<svg style="left:167.50px;top:641.00px" width="19" height="18" viewBox="0 0 19 18"><path d="M1 3 Q1 1 3 1 H7 L9 3 H15 Q17 3 17 5 V15 Q17 17 15 17 H3 Q1 17 1 15 Z" fill="none" stroke="#6a6a6a" stroke-width="1.4"/><path d="M9.5 2.4 H17" stroke="#6a6a6a" stroke-width="1.2"/></svg>
<svg style="left:197.50px;top:641.00px" width="17" height="19" viewBox="0 0 17 19"><line x1="3" y1="0.5" x2="3" y2="18" stroke="#777" stroke-width="1.3"/><circle cx="3" cy="5.5" r="2" fill="#3e3f45" stroke="#777" stroke-width="1.2"/><circle cx="3" cy="12.5" r="2" fill="#3e3f45" stroke="#777" stroke-width="1.2"/><path d="M7 5 H15.5 M7 9 H15.5 M7 13 H15.5" stroke="#777" stroke-width="1.4"/></svg>
<svg style="left:225.50px;top:641.00px" width="19" height="19" viewBox="0 0 19 19"><rect x="1" y="1" width="17" height="17" rx="3" fill="none" stroke="#6a6a6a" stroke-width="1.4"/><text x="9.5" y="12" font-size="5.5" text-anchor="middle" fill="#777" font-family="Liberation Sans">PCK</text></svg>
<svg style="left:255.50px;top:641.00px" width="18" height="19" viewBox="0 0 18 19"><rect x="1" y="1" width="16" height="17" fill="none" stroke="#fff" stroke-width="1.7"/><circle cx="5" cy="4.8" r="1.5" fill="none" stroke="#fff" stroke-width="1"/><rect x="9" y="3.8" width="2" height="2" fill="#fff"/><rect x="12.5" y="3.8" width="2" height="2" fill="#fff"/><path d="M5 6.5 V11 H7" fill="none" stroke="#fff" stroke-width="1"/><circle cx="11" cy="11.8" r="3.6" fill="none" stroke="#fff" stroke-width="1.1"/></svg>
<svg style="left:286.00px;top:641.00px" width="18" height="19" viewBox="0 0 18 19"><path d="M2 1 L13 12.5 M16 1 L5 12.5" stroke="#e8141c" stroke-width="1.5"/><circle cx="4" cy="15" r="2.6" fill="none" stroke="#e8141c" stroke-width="1.5"/><circle cx="14" cy="15" r="2.6" fill="none" stroke="#e8141c" stroke-width="1.5"/></svg>
<svg style="left:314.00px;top:641.00px" width="19" height="19" viewBox="0 0 19 19"><path d="M3.5 1 H1.2 V17.5 H3.5 M15.5 1 H17.8 V17.5 H15.5" fill="none" stroke="#fff" stroke-width="1.6"/><path d="M4 2 L12.5 11.5 M15 2 L6.5 11.5" stroke="#fff" stroke-width="1.5"/><circle cx="6" cy="13.8" r="2.3" fill="none" stroke="#fff" stroke-width="1.4"/><circle cx="13" cy="13.8" r="2.3" fill="none" stroke="#fff" stroke-width="1.4"/></svg>
<svg style="left:344.50px;top:641.50px" width="17" height="18" viewBox="0 0 17 18"><path d="M2.6 1 H12.6 L16 4.4 V15.4 Q16 17 14.4 17 H2.6 Q1 17 1 15.4 V2.6 Q1 1 2.6 1 Z" fill="none" stroke="#fff" stroke-width="1.7"/><rect x="4.6" y="1.6" width="7" height="4.2" fill="none" stroke="#fff" stroke-width="1.2"/><rect x="3.8" y="8.6" width="9.6" height="6.8" fill="#9a9a9a"/><path d="M3.8 10.3 H13.4 M3.8 12.3 H13.4 M3.8 14.2 H13.4 M5.8 8.6 V15.4 M7.8 8.6 V15.4 M9.8 8.6 V15.4 M11.8 8.6 V15.4" stroke="#444" stroke-width="0.7"/></svg>
<svg style="left:373.50px;top:643.50px" width="18" height="13" viewBox="0 0 18 13"><path d="M8.6 1.2 L1.4 6.3 L8.6 11.4 Z M16.4 1.2 L9.2 6.3 L16.4 11.4 Z" fill="#dcdcdc" stroke="#dcdcdc" stroke-width="1.6" stroke-linejoin="round"/></svg>
<div class="t" style="left:407.40px;top:646.40px;font-size:8.50px;color:#f0f0f0;font-weight:bold;transform:scale(1.0,1.18);transform-origin:0 7.20px;">X1</div>
<svg style="left:436.20px;top:643.50px" width="18" height="13" viewBox="0 0 18 13"><path d="M1.4 1.2 L8.6 6.3 L1.4 11.4 Z M9.2 1.2 L16.4 6.3 L9.2 11.4 Z" fill="#dcdcdc" stroke="#dcdcdc" stroke-width="1.6" stroke-linejoin="round"/></svg>
<svg style="left:484.20px;top:643.50px" width="12" height="13" viewBox="0 0 12 13"><rect x="0.4" y="0.6" width="2.8" height="11.4" rx="0.8" fill="#dcdcdc"/><path d="M10.4 1.2 L3.6 6.3 L10.4 11.4 Z" fill="#dcdcdc" stroke="#dcdcdc" stroke-width="1.6" stroke-linejoin="round"/></svg>
<svg style="left:512.50px;top:643.50px" width="10" height="13" viewBox="0 0 10 13"><path d="M9.2 1.2 L1.4 6.3 L9.2 11.4 Z" fill="#dcdcdc" stroke="#dcdcdc" stroke-width="1.6" stroke-linejoin="round"/></svg>
<div class="abs" style="left:521.00px;top:256.00px;width:813.00px;height:649.00px;background:#383845;"></div>
<div class="abs" style="left:521.00px;top:256.00px;width:813.00px;height:64.00px;background:#000;"></div>
<div class="abs" style="left:521.00px;top:320.30px;width:813.00px;height:1.60px;background:#2c2c2c;"></div>
<div class="t" style="left:534.60px;top:269.01px;font-size:32.00px;color:#ec1018;font-weight:bold;transform:scale(0.925,1.0);transform-origin:0 27.09px;letter-spacing:0px">NVR</div>
<div class="t" style="left:605.40px;top:280.50px;font-size:19.14px;color:#d41820;font-weight:normal;transform:scale(1.0,1.03);transform-origin:0 16.20px;">5.0</div>
<svg style="left:521px;top:255.2px" width="813" height="64" viewBox="25 16 813 64"><rect x="187.1" y="37" width="28.5" height="21.6" rx="2.5" fill="none" stroke="#f6f6f6" stroke-width="2"/><path d="M197.4 43.1 L205.3 47.6 L197.4 52.0 Z" fill="none" stroke="#f6f6f6" stroke-width="1.7" stroke-linejoin="round"/><rect x="245.6" y="35.2" width="25.6" height="25.3" rx="3" fill="none" stroke="#f6f6f6" stroke-width="2"/><path d="M251.6 35.2 V60.5 M265.9 35.2 V60.5" stroke="#f6f6f6" stroke-width="1.6"/><path d="M245.6 40.1 H251.6 M265.9 40.1 H271.2" stroke="#f6f6f6" stroke-width="1.6"/><path d="M245.6 45.1 H251.6 M265.9 45.1 H271.2" stroke="#f6f6f6" stroke-width="1.6"/><path d="M245.6 50.1 H251.6 M265.9 50.1 H271.2" stroke="#f6f6f6" stroke-width="1.6"/><path d="M245.6 55.1 H251.6 M265.9 55.1 H271.2" stroke="#f6f6f6" stroke-width="1.6"/><path d="M255.6 43.9 L262.3 48.3 L255.6 52.8 Z" fill="#f6f6f6"/><path d="M306.9 59.1 Q302.7 59.1 302.7 55 V38.6 Q302.7 36.3 305 36.3 H310.2 L313.2 39.4 H322.4 Q324.6 39.4 324.6 41.5 V42.6" fill="none" stroke="#f6f6f6" stroke-width="2" stroke-linejoin="round"/><rect x="306.9" y="42.6" width="21.8" height="16.5" rx="2.5" fill="none" stroke="#f6f6f6" stroke-width="2"/><rect x="359.1" y="36.7" width="27.1" height="17.2" fill="none" stroke="#f6f6f6" stroke-width="1.7"/><path d="M359.1 50 H386.2" stroke="#f6f6f6" stroke-width="1.4"/><path d="M370.6 54.5 L369.2 58.3 M375.8 54.5 L377.2 58.3" stroke="#f6f6f6" stroke-width="1.5"/><rect x="364.6" y="58" width="16.2" height="2.6" rx="1.3" fill="#f6f6f6"/><path d="M361 43.5 L362.3 41.8 L363.3 45.5 L364.5 42.5 L365.6 46.8 L366.8 44.5 L368 47.2 L369.3 45.8 L370.5 47 L371.6 44 L372.8 46.8 L374 41.5 L375.2 46.5 L376.5 43 L377.6 45.3 L378.8 41 L380 46.8 L381.2 44.5 L382.4 46 L384.2 43.8" fill="none" stroke="#f6f6f6" stroke-width="1.2" stroke-linejoin="round"/><rect x="415.3" y="38.4" width="20.6" height="18.9" rx="2" fill="none" stroke="#f6f6f6" stroke-width="2"/><path d="M436.8 47.8 L444.5 39.4 V56.3 Z" fill="none" stroke="#f6f6f6" stroke-width="1.9" stroke-linejoin="round"/><path d="M478.4 36 H494.4 Q495.4 36 495.7 37 L499.4 49.5 V57.4 Q499.4 59.4 497.4 59.4 H476.5 Q474.5 59.4 474.5 57.4 V49.5 L478.1 37 Q478.4 36 479.4 36 Z" fill="none" stroke="#e8141c" stroke-width="2" stroke-linejoin="round"/><path d="M474.5 50.4 H481.9 V53.2 Q481.9 54.3 483 54.3 H490.3 Q491.4 54.3 491.4 53.2 V50.4 H499.4" fill="none" stroke="#e8141c" stroke-width="2" stroke-linejoin="round"/><path d="M542.34 38.02 L542.62 35.37 L545.18 35.37 L545.46 38.02 L549.78 39.81 L551.86 38.13 L553.67 39.94 L551.99 42.02 L553.78 46.34 L556.43 46.62 L556.43 49.18 L553.78 49.46 L551.99 53.78 L553.67 55.86 L551.86 57.67 L549.78 55.99 L545.46 57.78 L545.18 60.43 L542.62 60.43 L542.34 57.78 L538.02 55.99 L535.94 57.67 L534.13 55.86 L535.81 53.78 L534.02 49.46 L531.37 49.18 L531.37 46.62 L534.02 46.34 L535.81 42.02 L534.13 39.94 L535.94 38.13 L538.02 39.81 Z" fill="none" stroke="#f6f6f6" stroke-width="1.9" stroke-linejoin="round"/><circle cx="543.9" cy="47.9" r="6.3" fill="none" stroke="#f6f6f6" stroke-width="1.8"/><circle cx="543.9" cy="47.9" r="2.6" fill="none" stroke="#f6f6f6" stroke-width="1.8"/><path d="M598.73 37.92 L598.98 35.26 L601.42 35.26 L601.67 37.92 L605.73 39.60 L607.78 37.89 L609.51 39.62 L607.80 41.67 L609.48 45.73 L612.14 45.98 L612.14 48.42 L609.48 48.67 L607.80 52.73 L609.51 54.78 L607.78 56.51 L605.73 54.80 L601.67 56.48 L601.42 59.14 L598.98 59.14 L598.73 56.48 L594.67 54.80 L592.62 56.51 L590.89 54.78 L592.60 52.73 L590.92 48.67 L588.26 48.42 L588.26 45.98 L590.92 45.73 L592.60 41.67 L590.89 39.62 L592.62 37.89 L594.67 39.60 Z" fill="none" stroke="#f6f6f6" stroke-width="1.9" stroke-linejoin="round"/><circle cx="600.2" cy="47.2" r="3.9" fill="none" stroke="#f6f6f6" stroke-width="1.9"/><rect x="601.6" y="49.2" width="15" height="13" fill="#000"/><rect x="603.3" y="50.9" width="10.6" height="9.6" fill="none" stroke="#f6f6f6" stroke-width="1.6"/><rect x="603.3" y="50.9" width="10.6" height="2.4" fill="#f6f6f6" opacity="0.8"/><path d="M605.3 56.3 L606.9 58.0 L610.0 54.6" fill="none" stroke="#f6f6f6" stroke-width="1.2"/><rect x="646.3" y="36.7" width="9.1" height="8.4" rx="3.6" fill="none" stroke="#f6f6f6" stroke-width="1.9"/><rect x="646.3" y="50.8" width="9.1" height="8.4" rx="3.6" fill="none" stroke="#f6f6f6" stroke-width="1.9"/><rect x="660.6" y="36.7" width="9.1" height="8.4" rx="3.6" fill="none" stroke="#f6f6f6" stroke-width="1.9"/><rect x="660.6" y="50.8" width="9.1" height="8.4" rx="3.6" fill="none" stroke="#f6f6f6" stroke-width="1.9"/><path d="M742 41 V51.6 M738.2 47.8 L742 51.6 L745.8 47.8" fill="none" stroke="#f6f6f6" stroke-width="1.5"/><path d="M735.7 49.4 V54.2 H748.3 V49.4" fill="none" stroke="#f6f6f6" stroke-width="1.6"/><path d="M758.6 53 Q760.6 51.2 760.8 48 V46 Q761 41.4 764.5 41.3 Q768 41.4 768.2 46 V48 Q768.4 51.2 770.4 53 Z" fill="none" stroke="#f6f6f6" stroke-width="1.5" stroke-linejoin="round"/><path d="M763 53.4 Q764.5 55.4 766 53.4" fill="none" stroke="#f6f6f6" stroke-width="1.3"/><path d="M783.7 41.8 H791.3 L793.4 48.2 V53 Q793.4 54 792.4 54 H782.6 Q781.6 54 781.6 53 V48.2 Z" fill="none" stroke="#f6f6f6" stroke-width="1.5" stroke-linejoin="round"/><path d="M781.6 49.8 H793.4" stroke="#f6f6f6" stroke-width="1.4"/><rect x="784.4" y="44.2" width="6.4" height="3.2" fill="#bbb"/><path d="M803.6 42.8 V53.7" stroke="#9a9a9a" stroke-width="1"/><path d="M815.6 42.0 A6.9 6.9 0 1 0 823.6 42.0" fill="none" stroke="#f6f6f6" stroke-width="1.5"/><path d="M819.6 40.0 V47" stroke="#f6f6f6" stroke-width="1.6"/></svg>
<div class="abs" style="left:1333.00px;top:256.00px;width:1.00px;height:649.00px;background:#2b2b30;"></div>
<div class="abs" style="left:521.00px;top:321.00px;width:123.50px;height:583.00px;background:#393939;"></div>
<div class="abs" style="left:521.00px;top:256.00px;width:1.20px;height:649.00px;background:#2a2a2a;"></div>
<div class="abs" style="left:521.00px;top:903.80px;width:813.00px;height:1.20px;background:#05050e;"></div>
<div class="abs" style="left:521.00px;top:917.00px;width:813.00px;height:10.00px;background:#ffffff;"></div>
<div class="abs" style="left:521.00px;top:255.00px;width:316.00px;height:1.00px;background:#333;"></div>
<div class="t" style="left:540.10px;top:332.50px;font-size:7.91px;color:#d0d0d0;font-weight:normal;transform:scale(1.0,0.95);transform-origin:0 6.70px;">Grafik</div>
<div class="abs" style="left:522.00px;top:352.30px;width:118.30px;height:24.50px;background:#161616;"></div>
<div class="abs" style="left:636.90px;top:353.80px;width:3.50px;height:21.10px;background:#e8141c;"></div>
<svg style="left:522.00px;top:352.00px" width="24" height="24" viewBox="0 0 24 24"><path d="M8.4 14.6 V6.7 H16.6 V9.8 M8.4 14.9 H10.8" fill="none" stroke="#e8141c" stroke-width="1.5"/><rect x="4.2" y="7.2" width="3.2" height="8" fill="#e8141c"/><rect x="5.2" y="8.8" width="1.4" height="1.6" fill="#181818"/><rect x="5.2" y="11.9" width="1.4" height="1.6" fill="#181818"/><path d="M14.19 11.36 L14.27 10.13 L15.33 10.13 L15.41 11.36 L16.45 11.79 L17.37 10.98 L18.12 11.73 L17.31 12.65 L17.74 13.69 L18.97 13.77 L18.97 14.83 L17.74 14.91 L17.31 15.95 L18.12 16.87 L17.37 17.62 L16.45 16.81 L15.41 17.24 L15.33 18.47 L14.27 18.47 L14.19 17.24 L13.15 16.81 L12.23 17.62 L11.48 16.87 L12.29 15.95 L11.86 14.91 L10.63 14.83 L10.63 13.77 L11.86 13.69 L12.29 12.65 L11.48 11.73 L12.23 10.98 L13.15 11.79 Z" fill="#e8141c"/><circle cx="14.8" cy="14.3" r="1.3" fill="#181818"/></svg>
<div class="t" style="left:545.40px;top:361.78px;font-size:9.24px;color:#e8141c;font-weight:normal;transform:scale(1.0,1.1);transform-origin:0 7.82px;">Zapis</div>
<svg style="left:526.00px;top:398.50px" width="14" height="15" viewBox="0 0 14 15"><ellipse cx="6.8" cy="2.6" rx="5.6" ry="1.9" fill="none" stroke="#eee" stroke-width="1.3"/><path d="M1.2 2.6 V11.6 Q1.2 13.6 6.8 13.6 Q12.4 13.6 12.4 11.6 V2.6 M1.2 5.8 Q1.2 7.8 6.8 7.8 Q12.4 7.8 12.4 5.8 M1.2 8.8 Q1.2 10.8 6.8 10.8 Q12.4 10.8 12.4 8.8" fill="none" stroke="#eee" stroke-width="1.3"/></svg>
<div class="t" style="left:544.40px;top:403.22px;font-size:9.07px;color:#ececec;font-weight:normal;transform:scale(1.0,1.08);transform-origin:0 7.68px;">Urządzenie Magazyn...</div>
<svg style="left:522.00px;top:428.00px" width="20" height="16" viewBox="0 0 20 16"><path d="M6.6 11 V4.6 Q6.6 3 8.2 3 H14.4 Q16 3 16 4.6 V11" fill="none" stroke="#c4c4c4" stroke-width="1.3"/><path d="M6.6 5.8 H16 M6.6 8.6 H16" stroke="#c4c4c4" stroke-width="1.2"/><path d="M5.2 10.6 L4.4 13.8 H18.2 L17.4 10.6 Z" fill="none" stroke="#c4c4c4" stroke-width="1.3" stroke-linejoin="round"/></svg>
<div class="t" style="left:546.40px;top:434.61px;font-size:9.08px;color:#8a8a8a;font-weight:normal;transform:scale(1.0,1.05);transform-origin:0 7.69px;">Tryb magazynowania</div>
<svg style="left:522.00px;top:458.00px" width="20" height="22" viewBox="0 0 20 22"><path d="M9.8 17.4 H5.4 Q4.6 17.4 4.6 16.6 V5.8 Q4.6 5 5.4 5 H11.4 L14.8 8.4 V9.6" fill="none" stroke="#c4c4c4" stroke-width="1.4"/><path d="M12.60 10.60 L12.77 9.45 L14.03 9.45 L14.20 10.60 L15.69 11.46 L16.77 11.03 L17.40 12.12 L16.48 12.84 L16.48 14.56 L17.40 15.28 L16.77 16.37 L15.69 15.94 L14.20 16.80 L14.03 17.95 L12.77 17.95 L12.60 16.80 L11.11 15.94 L10.03 16.37 L9.40 15.28 L10.32 14.56 L10.32 12.84 L9.40 12.12 L10.03 11.03 L11.11 11.46 Z" fill="none" stroke="#d0d0d0" stroke-width="1.3"/><circle cx="13.4" cy="13.7" r="1.2" fill="#c4c4c4"/></svg>
<div class="t" style="left:545.10px;top:466.99px;font-size:9.11px;color:#8a8a8a;font-weight:normal;transform:scale(1.0,1.05);transform-origin:0 7.71px;">Automatyczny zapis ...</div>
<svg style="left:522.00px;top:490.00px" width="20" height="20" viewBox="0 0 20 20"><path d="M4.7 3.3 H16 M4.7 5.6 H16" stroke="#c4c4c4" stroke-width="1.2"/><path d="M4.7 10 H7.6 M4.7 15.4 H7.6" stroke="#c4c4c4" stroke-width="1.3"/><path d="M12.55 9.51 L12.73 8.25 L14.07 8.25 L14.25 9.51 L15.83 10.42 L17.00 9.94 L17.68 11.11 L16.67 11.89 L16.67 13.71 L17.68 14.49 L17.00 15.66 L15.83 15.18 L14.25 16.09 L14.07 17.35 L12.73 17.35 L12.55 16.09 L10.97 15.18 L9.80 15.66 L9.12 14.49 L10.13 13.71 L10.13 11.89 L9.12 11.11 L9.80 9.94 L10.97 10.42 Z" fill="none" stroke="#d0d0d0" stroke-width="1.3"/><circle cx="13.4" cy="12.8" r="1.3" fill="#c4c4c4"/></svg>
<div class="t" style="left:545.10px;top:498.44px;font-size:9.28px;color:#8a8a8a;font-weight:normal;transform:scale(1.0,1.05);transform-origin:0 7.86px;">Zaawansowane</div>
<div class="t" style="left:666.50px;top:347.91px;font-size:8.85px;color:#f4f4f4;font-weight:bold;transform:scale(1.0,1.15);transform-origin:0 7.49px;">Kanał</div>
<div class="abs" style="left:801.00px;top:339.20px;width:153.00px;height:24.80px;background:#252527;border-radius:3px"></div>
<div class="t" style="left:810.30px;top:348.00px;font-size:8.27px;color:#f0f0f0;font-weight:normal;">1</div>
<svg style="left:940.00px;top:349.50px" width="8" height="5" viewBox="0 0 8 5"><path d="M1.2 1 L4 3.8 L6.8 1" fill="none" stroke="#ccc" stroke-width="1.1"/></svg>
<div class="t" style="left:666.50px;top:392.08px;font-size:9.00px;color:#f4f4f4;font-weight:bold;transform:scale(1.0,1.15);transform-origin:0 7.62px;">Włącz</div>
<svg style="left:801.50px;top:389.20px" width="13" height="13.4" viewBox="0 0 13 13.4"><rect x="0.7" y="0.7" width="11.6" height="11.8" rx="1.2" fill="none" stroke="#b02a32" stroke-width="1.3"/><path d="M2.8 6.3 L5.3 8.9 L10.3 3.4" fill="none" stroke="#e8141c" stroke-width="1.4"/></svg>
<div class="abs" style="left:1196.40px;top:422.20px;width:87.60px;height:24.80px;background:#262628;border-radius:3px"></div>
<div class="t" style="left:1205.80px;top:429.98px;font-size:9.36px;color:#f4f4f4;font-weight:normal;transform:scale(1.0,1.08);transform-origin:0 7.92px;text-shadow:0 0 0.5px #fff">Więcej ustawień</div>
<div class="abs" style="left:645.30px;top:459.60px;width:656.00px;height:1.40px;background:#7c808a;"></div>
<div class="abs" style="left:645.30px;top:459.60px;width:1.40px;height:275.50px;background:#7c808a;"></div>
<div class="abs" style="left:1300.00px;top:459.60px;width:1.40px;height:275.50px;background:#7c808a;"></div>
<div class="abs" style="left:714.80px;top:459.60px;width:1.30px;height:275.50px;background:#7c808a;"></div>
<svg style="left:647.80px;top:469.60px" width="13" height="13" viewBox="0 0 13 13"><rect x="0.85" y="0.85" width="11.30" height="11.30" rx="2.2" fill="none" stroke="#f0f0f0" stroke-width="1.7"/></svg>
<div class="t" style="left:665.30px;top:471.84px;font-size:9.40px;color:#d0d0d0;font-weight:normal;transform:scale(1.0,1.1);transform-origin:0 7.96px;">Wsz.</div>
<div class="t" style="left:716.00px;top:472.69px;font-size:8.99px;color:#9c9c9c;font-weight:normal;transform:scale(1.0,1.1);transform-origin:0 7.61px;">0</div>
<div class="t" style="left:759.00px;top:472.69px;font-size:8.99px;color:#9c9c9c;font-weight:normal;transform:scale(1.0,1.1);transform-origin:0 7.61px;">2</div>
<div class="t" style="left:802.80px;top:472.69px;font-size:8.99px;color:#9c9c9c;font-weight:normal;transform:scale(1.0,1.1);transform-origin:0 7.61px;">4</div>
<div class="t" style="left:846.00px;top:472.69px;font-size:8.99px;color:#9c9c9c;font-weight:normal;transform:scale(1.0,1.1);transform-origin:0 7.61px;">6</div>
<div class="t" style="left:889.00px;top:472.69px;font-size:8.99px;color:#9c9c9c;font-weight:normal;transform:scale(1.0,1.1);transform-origin:0 7.61px;">8</div>
<div class="t" style="left:932.00px;top:472.69px;font-size:8.99px;color:#9c9c9c;font-weight:normal;transform:scale(1.0,1.1);transform-origin:0 7.61px;">10</div>
<div class="t" style="left:975.00px;top:472.69px;font-size:8.99px;color:#9c9c9c;font-weight:normal;transform:scale(1.0,1.1);transform-origin:0 7.61px;">12</div>
<div class="t" style="left:1018.00px;top:472.69px;font-size:8.99px;color:#9c9c9c;font-weight:normal;transform:scale(1.0,1.1);transform-origin:0 7.61px;">14</div>
<div class="t" style="left:1061.00px;top:472.69px;font-size:8.99px;color:#9c9c9c;font-weight:normal;transform:scale(1.0,1.1);transform-origin:0 7.61px;">16</div>
<div class="t" style="left:1104.50px;top:472.69px;font-size:8.99px;color:#9c9c9c;font-weight:normal;transform:scale(1.0,1.1);transform-origin:0 7.61px;">18</div>
<div class="t" style="left:1147.50px;top:472.69px;font-size:8.99px;color:#9c9c9c;font-weight:normal;transform:scale(1.0,1.1);transform-origin:0 7.61px;">20</div>
<div class="t" style="left:1191.00px;top:472.69px;font-size:8.99px;color:#9c9c9c;font-weight:normal;transform:scale(1.0,1.1);transform-origin:0 7.61px;">22</div>
<div class="t" style="left:1223.50px;top:472.69px;font-size:8.99px;color:#9c9c9c;font-weight:normal;transform:scale(1.0,1.1);transform-origin:0 7.61px;">24</div>
<div class="abs" style="left:713.50px;top:468.00px;width:1.30px;height:16.00px;background:#393a46;"></div>
<div class="abs" style="left:714.80px;top:459.60px;width:1.30px;height:275.50px;background:#7c808a;"></div>
<div class="abs" style="left:645.30px;top:494.40px;width:656.00px;height:1.30px;background:#7c808a;"></div>
<div class="abs" style="left:1242.00px;top:494.40px;width:1.30px;height:34.30px;background:#7c808a;"></div>
<svg style="left:647.80px;top:504.20px" width="13" height="13" viewBox="0 0 13 13"><rect x="0.85" y="0.85" width="11.30" height="11.30" rx="2.2" fill="none" stroke="#f0f0f0" stroke-width="1.7"/></svg>
<div class="t" style="left:665.30px;top:506.03px;font-size:9.30px;color:#d0d0d0;font-weight:normal;transform:scale(1.0,1.1);transform-origin:0 7.87px;">Nie.</div>
<svg style="left:716.20px;top:496.00px" width="519" height="28" viewBox="0 0 519 28"><rect x="0" y="0" width="519" height="28" fill="#2a2a2c"/><rect x="0.70" y="1.0" width="20.4" height="5.0" fill="#12d812"/><rect x="0.70" y="6.80" width="20.4" height="4.35" fill="#5a5a5a"/><rect x="0.70" y="11.95" width="20.4" height="4.35" fill="#5a5a5a"/><rect x="0.70" y="17.10" width="20.4" height="4.35" fill="#5a5a5a"/><rect x="0.70" y="22.25" width="20.4" height="4.35" fill="#5a5a5a"/><rect x="22.30" y="1.0" width="20.4" height="5.0" fill="#12d812"/><rect x="22.30" y="6.80" width="20.4" height="4.35" fill="#5a5a5a"/><rect x="22.30" y="11.95" width="20.4" height="4.35" fill="#5a5a5a"/><rect x="22.30" y="17.10" width="20.4" height="4.35" fill="#5a5a5a"/><rect x="22.30" y="22.25" width="20.4" height="4.35" fill="#5a5a5a"/><rect x="43.90" y="1.0" width="20.4" height="5.0" fill="#12d812"/><rect x="43.90" y="6.80" width="20.4" height="4.35" fill="#5a5a5a"/><rect x="43.90" y="11.95" width="20.4" height="4.35" fill="#5a5a5a"/><rect x="43.90" y="17.10" width="20.4" height="4.35" fill="#5a5a5a"/><rect x="43.90" y="22.25" width="20.4" height="4.35" fill="#5a5a5a"/><rect x="65.50" y="1.0" width="20.4" height="5.0" fill="#12d812"/><rect x="65.50" y="6.80" width="20.4" height="4.35" fill="#5a5a5a"/><rect x="65.50" y="11.95" width="20.4" height="4.35" fill="#5a5a5a"/><rect x="65.50" y="17.10" width="20.4" height="4.35" fill="#5a5a5a"/><rect x="65.50" y="22.25" width="20.4" height="4.35" fill="#5a5a5a"/><rect x="87.10" y="1.0" width="20.4" height="5.0" fill="#12d812"/><rect x="87.10" y="6.80" width="20.4" height="4.35" fill="#5a5a5a"/><rect x="87.10" y="11.95" width="20.4" height="4.35" fill="#5a5a5a"/><rect x="87.10" y="17.10" width="20.4" height="4.35" fill="#5a5a5a"/><rect x="87.10" y="22.25" width="20.4" height="4.35" fill="#5a5a5a"/><rect x="108.70" y="1.0" width="20.4" height="5.0" fill="#12d812"/><rect x="108.70" y="6.80" width="20.4" height="4.35" fill="#5a5a5a"/><rect x="108.70" y="11.95" width="20.4" height="4.35" fill="#5a5a5a"/><rect x="108.70" y="17.10" width="20.4" height="4.35" fill="#5a5a5a"/><rect x="108.70" y="22.25" width="20.4" height="4.35" fill="#5a5a5a"/><rect x="130.30" y="1.0" width="20.4" height="5.0" fill="#12d812"/><rect x="130.30" y="6.80" width="20.4" height="4.35" fill="#5a5a5a"/><rect x="130.30" y="11.95" width="20.4" height="4.35" fill="#5a5a5a"/><rect x="130.30" y="17.10" width="20.4" height="4.35" fill="#5a5a5a"/><rect x="130.30" y="22.25" width="20.4" height="4.35" fill="#5a5a5a"/><rect x="151.90" y="1.0" width="20.4" height="5.0" fill="#12d812"/><rect x="151.90" y="6.80" width="20.4" height="4.35" fill="#5a5a5a"/><rect x="151.90" y="11.95" width="20.4" height="4.35" fill="#5a5a5a"/><rect x="151.90" y="17.10" width="20.4" height="4.35" fill="#5a5a5a"/><rect x="151.90" y="22.25" width="20.4" height="4.35" fill="#5a5a5a"/><rect x="173.50" y="1.0" width="20.4" height="5.0" fill="#12d812"/><rect x="173.50" y="6.80" width="20.4" height="4.35" fill="#5a5a5a"/><rect x="173.50" y="11.95" width="20.4" height="4.35" fill="#5a5a5a"/><rect x="173.50" y="17.10" width="20.4" height="4.35" fill="#5a5a5a"/><rect x="173.50" y="22.25" width="20.4" height="4.35" fill="#5a5a5a"/><rect x="195.10" y="1.0" width="20.4" height="5.0" fill="#12d812"/><rect x="195.10" y="6.80" width="20.4" height="4.35" fill="#5a5a5a"/><rect x="195.10" y="11.95" width="20.4" height="4.35" fill="#5a5a5a"/><rect x="195.10" y="17.10" width="20.4" height="4.35" fill="#5a5a5a"/><rect x="195.10" y="22.25" width="20.4" height="4.35" fill="#5a5a5a"/><rect x="216.70" y="1.0" width="20.4" height="5.0" fill="#12d812"/><rect x="216.70" y="6.80" width="20.4" height="4.35" fill="#5a5a5a"/><rect x="216.70" y="11.95" width="20.4" height="4.35" fill="#5a5a5a"/><rect x="216.70" y="17.10" width="20.4" height="4.35" fill="#5a5a5a"/><rect x="216.70" y="22.25" width="20.4" height="4.35" fill="#5a5a5a"/><rect x="238.30" y="1.0" width="20.4" height="5.0" fill="#12d812"/><rect x="238.30" y="6.80" width="20.4" height="4.35" fill="#5a5a5a"/><rect x="238.30" y="11.95" width="20.4" height="4.35" fill="#5a5a5a"/><rect x="238.30" y="17.10" width="20.4" height="4.35" fill="#5a5a5a"/><rect x="238.30" y="22.25" width="20.4" height="4.35" fill="#5a5a5a"/><rect x="259.90" y="1.0" width="20.4" height="5.0" fill="#12d812"/><rect x="259.90" y="6.80" width="20.4" height="4.35" fill="#5a5a5a"/><rect x="259.90" y="11.95" width="20.4" height="4.35" fill="#5a5a5a"/><rect x="259.90" y="17.10" width="20.4" height="4.35" fill="#5a5a5a"/><rect x="259.90" y="22.25" width="20.4" height="4.35" fill="#5a5a5a"/><rect x="281.50" y="1.0" width="20.4" height="5.0" fill="#12d812"/><rect x="281.50" y="6.80" width="20.4" height="4.35" fill="#5a5a5a"/><rect x="281.50" y="11.95" width="20.4" height="4.35" fill="#5a5a5a"/><rect x="281.50" y="17.10" width="20.4" height="4.35" fill="#5a5a5a"/><rect x="281.50" y="22.25" width="20.4" height="4.35" fill="#5a5a5a"/><rect x="303.10" y="1.0" width="20.4" height="5.0" fill="#12d812"/><rect x="303.10" y="6.80" width="20.4" height="4.35" fill="#5a5a5a"/><rect x="303.10" y="11.95" width="20.4" height="4.35" fill="#5a5a5a"/><rect x="303.10" y="17.10" width="20.4" height="4.35" fill="#5a5a5a"/><rect x="303.10" y="22.25" width="20.4" height="4.35" fill="#5a5a5a"/><rect x="324.70" y="1.0" width="20.4" height="5.0" fill="#12d812"/><rect x="324.70" y="6.80" width="20.4" height="4.35" fill="#5a5a5a"/><rect x="324.70" y="11.95" width="20.4" height="4.35" fill="#5a5a5a"/><rect x="324.70" y="17.10" width="20.4" height="4.35" fill="#5a5a5a"/><rect x="324.70" y="22.25" width="20.4" height="4.35" fill="#5a5a5a"/><rect x="346.30" y="1.0" width="20.4" height="5.0" fill="#12d812"/><rect x="346.30" y="6.80" width="20.4" height="4.35" fill="#5a5a5a"/><rect x="346.30" y="11.95" width="20.4" height="4.35" fill="#5a5a5a"/><rect x="346.30" y="17.10" width="20.4" height="4.35" fill="#5a5a5a"/><rect x="346.30" y="22.25" width="20.4" height="4.35" fill="#5a5a5a"/><rect x="367.90" y="1.0" width="20.4" height="5.0" fill="#12d812"/><rect x="367.90" y="6.80" width="20.4" height="4.35" fill="#5a5a5a"/><rect x="367.90" y="11.95" width="20.4" height="4.35" fill="#5a5a5a"/><rect x="367.90" y="17.10" width="20.4" height="4.35" fill="#5a5a5a"/><rect x="367.90" y="22.25" width="20.4" height="4.35" fill="#5a5a5a"/><rect x="389.50" y="1.0" width="20.4" height="5.0" fill="#12d812"/><rect x="389.50" y="6.80" width="20.4" height="4.35" fill="#5a5a5a"/><rect x="389.50" y="11.95" width="20.4" height="4.35" fill="#5a5a5a"/><rect x="389.50" y="17.10" width="20.4" height="4.35" fill="#5a5a5a"/><rect x="389.50" y="22.25" width="20.4" height="4.35" fill="#5a5a5a"/><rect x="411.10" y="1.0" width="20.4" height="5.0" fill="#12d812"/><rect x="411.10" y="6.80" width="20.4" height="4.35" fill="#5a5a5a"/><rect x="411.10" y="11.95" width="20.4" height="4.35" fill="#5a5a5a"/><rect x="411.10" y="17.10" width="20.4" height="4.35" fill="#5a5a5a"/><rect x="411.10" y="22.25" width="20.4" height="4.35" fill="#5a5a5a"/><rect x="432.70" y="1.0" width="20.4" height="5.0" fill="#12d812"/><rect x="432.70" y="6.80" width="20.4" height="4.35" fill="#5a5a5a"/><rect x="432.70" y="11.95" width="20.4" height="4.35" fill="#5a5a5a"/><rect x="432.70" y="17.10" width="20.4" height="4.35" fill="#5a5a5a"/><rect x="432.70" y="22.25" width="20.4" height="4.35" fill="#5a5a5a"/><rect x="454.30" y="1.0" width="20.4" height="5.0" fill="#12d812"/><rect x="454.30" y="6.80" width="20.4" height="4.35" fill="#5a5a5a"/><rect x="454.30" y="11.95" width="20.4" height="4.35" fill="#5a5a5a"/><rect x="454.30" y="17.10" width="20.4" height="4.35" fill="#5a5a5a"/><rect x="454.30" y="22.25" width="20.4" height="4.35" fill="#5a5a5a"/><rect x="475.90" y="1.0" width="20.4" height="5.0" fill="#12d812"/><rect x="475.90" y="6.80" width="20.4" height="4.35" fill="#5a5a5a"/><rect x="475.90" y="11.95" width="20.4" height="4.35" fill="#5a5a5a"/><rect x="475.90" y="17.10" width="20.4" height="4.35" fill="#5a5a5a"/><rect x="475.90" y="22.25" width="20.4" height="4.35" fill="#5a5a5a"/><rect x="497.50" y="1.0" width="20.4" height="5.0" fill="#12d812"/><rect x="497.50" y="6.80" width="20.4" height="4.35" fill="#5a5a5a"/><rect x="497.50" y="11.95" width="20.4" height="4.35" fill="#5a5a5a"/><rect x="497.50" y="17.10" width="20.4" height="4.35" fill="#5a5a5a"/><rect x="497.50" y="22.25" width="20.4" height="4.35" fill="#5a5a5a"/></svg>
<svg style="left:1255.00px;top:496.00px" width="30" height="28" viewBox="0 0 30 28"><path d="M14.2 10.6 L19.4 4.6" stroke="#f4f4f4" stroke-width="3.4" stroke-linecap="round"/><path d="M14.9 9.8 L18.7 5.4" stroke="#151515" stroke-width="1.0" stroke-linecap="round"/><rect x="6.2" y="9.8" width="16.6" height="3.8" rx="1.3" fill="#151515" stroke="#f4f4f4" stroke-width="1.5"/><path d="M7.6 13.6 V20.4 Q7.6 21.9 9.1 21.9 H19.9 Q21.4 21.9 21.4 20.4 V13.6" fill="#151515" stroke="#f4f4f4" stroke-width="1.6"/><path d="M7.6 14.7 H21.4" stroke="#f4f4f4" stroke-width="1.3"/><path d="M11.1 15 V21.2 M14.5 15 V21.2 M17.9 15 V21.2" stroke="#f4f4f4" stroke-width="1.5"/></svg>
<div class="abs" style="left:645.30px;top:528.66px;width:656.00px;height:1.30px;background:#7c808a;"></div>
<div class="abs" style="left:1242.00px;top:528.66px;width:1.30px;height:34.30px;background:#7c808a;"></div>
<svg style="left:647.80px;top:538.46px" width="13" height="13" viewBox="0 0 13 13"><rect x="0.85" y="0.85" width="11.30" height="11.30" rx="2.2" fill="none" stroke="#f0f0f0" stroke-width="1.7"/></svg>
<div class="t" style="left:665.30px;top:540.29px;font-size:9.30px;color:#d0d0d0;font-weight:normal;transform:scale(1.0,1.1);transform-origin:0 7.87px;">Pon.</div>
<svg style="left:716.20px;top:531.00px" width="519" height="28" viewBox="0 0 519 28"><rect x="0" y="0" width="519" height="28" fill="#2a2a2c"/><rect x="0.70" y="1.0" width="20.4" height="5.0" fill="#12d812"/><rect x="0.70" y="6.80" width="20.4" height="4.35" fill="#5a5a5a"/><rect x="0.70" y="11.95" width="20.4" height="4.35" fill="#5a5a5a"/><rect x="0.70" y="17.10" width="20.4" height="4.35" fill="#5a5a5a"/><rect x="0.70" y="22.25" width="20.4" height="4.35" fill="#5a5a5a"/><rect x="22.30" y="1.0" width="20.4" height="5.0" fill="#12d812"/><rect x="22.30" y="6.80" width="20.4" height="4.35" fill="#5a5a5a"/><rect x="22.30" y="11.95" width="20.4" height="4.35" fill="#5a5a5a"/><rect x="22.30" y="17.10" width="20.4" height="4.35" fill="#5a5a5a"/><rect x="22.30" y="22.25" width="20.4" height="4.35" fill="#5a5a5a"/><rect x="43.90" y="1.0" width="20.4" height="5.0" fill="#12d812"/><rect x="43.90" y="6.80" width="20.4" height="4.35" fill="#5a5a5a"/><rect x="43.90" y="11.95" width="20.4" height="4.35" fill="#5a5a5a"/><rect x="43.90" y="17.10" width="20.4" height="4.35" fill="#5a5a5a"/><rect x="43.90" y="22.25" width="20.4" height="4.35" fill="#5a5a5a"/><rect x="65.50" y="1.0" width="20.4" height="5.0" fill="#12d812"/><rect x="65.50" y="6.80" width="20.4" height="4.35" fill="#5a5a5a"/><rect x="65.50" y="11.95" width="20.4" height="4.35" fill="#5a5a5a"/><rect x="65.50" y="17.10" width="20.4" height="4.35" fill="#5a5a5a"/><rect x="65.50" y="22.25" width="20.4" height="4.35" fill="#5a5a5a"/><rect x="87.10" y="1.0" width="20.4" height="5.0" fill="#12d812"/><rect x="87.10" y="6.80" width="20.4" height="4.35" fill="#5a5a5a"/><rect x="87.10" y="11.95" width="20.4" height="4.35" fill="#5a5a5a"/><rect x="87.10" y="17.10" width="20.4" height="4.35" fill="#5a5a5a"/><rect x="87.10" y="22.25" width="20.4" height="4.35" fill="#5a5a5a"/><rect x="108.70" y="1.0" width="20.4" height="5.0" fill="#12d812"/><rect x="108.70" y="6.80" width="20.4" height="4.35" fill="#5a5a5a"/><rect x="108.70" y="11.95" width="20.4" height="4.35" fill="#5a5a5a"/><rect x="108.70" y="17.10" width="20.4" height="4.35" fill="#5a5a5a"/><rect x="108.70" y="22.25" width="20.4" height="4.35" fill="#5a5a5a"/><rect x="130.30" y="1.0" width="20.4" height="5.0" fill="#12d812"/><rect x="130.30" y="6.80" width="20.4" height="4.35" fill="#5a5a5a"/><rect x="130.30" y="11.95" width="20.4" height="4.35" fill="#5a5a5a"/><rect x="130.30" y="17.10" width="20.4" height="4.35" fill="#5a5a5a"/><rect x="130.30" y="22.25" width="20.4" height="4.35" fill="#5a5a5a"/><rect x="151.90" y="1.0" width="20.4" height="5.0" fill="#12d812"/><rect x="151.90" y="6.80" width="20.4" height="4.35" fill="#5a5a5a"/><rect x="151.90" y="11.95" width="20.4" height="4.35" fill="#5a5a5a"/><rect x="151.90" y="17.10" width="20.4" height="4.35" fill="#5a5a5a"/><rect x="151.90" y="22.25" width="20.4" height="4.35" fill="#5a5a5a"/><rect x="173.50" y="1.0" width="20.4" height="5.0" fill="#12d812"/><rect x="173.50" y="6.80" width="20.4" height="4.35" fill="#5a5a5a"/><rect x="173.50" y="11.95" width="20.4" height="4.35" fill="#5a5a5a"/><rect x="173.50" y="17.10" width="20.4" height="4.35" fill="#5a5a5a"/><rect x="173.50" y="22.25" width="20.4" height="4.35" fill="#5a5a5a"/><rect x="195.10" y="1.0" width="20.4" height="5.0" fill="#12d812"/><rect x="195.10" y="6.80" width="20.4" height="4.35" fill="#5a5a5a"/><rect x="195.10" y="11.95" width="20.4" height="4.35" fill="#5a5a5a"/><rect x="195.10" y="17.10" width="20.4" height="4.35" fill="#5a5a5a"/><rect x="195.10" y="22.25" width="20.4" height="4.35" fill="#5a5a5a"/><rect x="216.70" y="1.0" width="20.4" height="5.0" fill="#12d812"/><rect x="216.70" y="6.80" width="20.4" height="4.35" fill="#5a5a5a"/><rect x="216.70" y="11.95" width="20.4" height="4.35" fill="#5a5a5a"/><rect x="216.70" y="17.10" width="20.4" height="4.35" fill="#5a5a5a"/><rect x="216.70" y="22.25" width="20.4" height="4.35" fill="#5a5a5a"/><rect x="238.30" y="1.0" width="20.4" height="5.0" fill="#12d812"/><rect x="238.30" y="6.80" width="20.4" height="4.35" fill="#5a5a5a"/><rect x="238.30" y="11.95" width="20.4" height="4.35" fill="#5a5a5a"/><rect x="238.30" y="17.10" width="20.4" height="4.35" fill="#5a5a5a"/><rect x="238.30" y="22.25" width="20.4" height="4.35" fill="#5a5a5a"/><rect x="259.90" y="1.0" width="20.4" height="5.0" fill="#12d812"/><rect x="259.90" y="6.80" width="20.4" height="4.35" fill="#5a5a5a"/><rect x="259.90" y="11.95" width="20.4" height="4.35" fill="#5a5a5a"/><rect x="259.90" y="17.10" width="20.4" height="4.35" fill="#5a5a5a"/><rect x="259.90" y="22.25" width="20.4" height="4.35" fill="#5a5a5a"/><rect x="281.50" y="1.0" width="20.4" height="5.0" fill="#12d812"/><rect x="281.50" y="6.80" width="20.4" height="4.35" fill="#5a5a5a"/><rect x="281.50" y="11.95" width="20.4" height="4.35" fill="#5a5a5a"/><rect x="281.50" y="17.10" width="20.4" height="4.35" fill="#5a5a5a"/><rect x="281.50" y="22.25" width="20.4" height="4.35" fill="#5a5a5a"/><rect x="303.10" y="1.0" width="20.4" height="5.0" fill="#12d812"/><rect x="303.10" y="6.80" width="20.4" height="4.35" fill="#5a5a5a"/><rect x="303.10" y="11.95" width="20.4" height="4.35" fill="#5a5a5a"/><rect x="303.10" y="17.10" width="20.4" height="4.35" fill="#5a5a5a"/><rect x="303.10" y="22.25" width="20.4" height="4.35" fill="#5a5a5a"/><rect x="324.70" y="1.0" width="20.4" height="5.0" fill="#12d812"/><rect x="324.70" y="6.80" width="20.4" height="4.35" fill="#5a5a5a"/><rect x="324.70" y="11.95" width="20.4" height="4.35" fill="#5a5a5a"/><rect x="324.70" y="17.10" width="20.4" height="4.35" fill="#5a5a5a"/><rect x="324.70" y="22.25" width="20.4" height="4.35" fill="#5a5a5a"/><rect x="346.30" y="1.0" width="20.4" height="5.0" fill="#12d812"/><rect x="346.30" y="6.80" width="20.4" height="4.35" fill="#5a5a5a"/><rect x="346.30" y="11.95" width="20.4" height="4.35" fill="#5a5a5a"/><rect x="346.30" y="17.10" width="20.4" height="4.35" fill="#5a5a5a"/><rect x="346.30" y="22.25" width="20.4" height="4.35" fill="#5a5a5a"/><rect x="367.90" y="1.0" width="20.4" height="5.0" fill="#12d812"/><rect x="367.90" y="6.80" width="20.4" height="4.35" fill="#5a5a5a"/><rect x="367.90" y="11.95" width="20.4" height="4.35" fill="#5a5a5a"/><rect x="367.90" y="17.10" width="20.4" height="4.35" fill="#5a5a5a"/><rect x="367.90" y="22.25" width="20.4" height="4.35" fill="#5a5a5a"/><rect x="389.50" y="1.0" width="20.4" height="5.0" fill="#12d812"/><rect x="389.50" y="6.80" width="20.4" height="4.35" fill="#5a5a5a"/><rect x="389.50" y="11.95" width="20.4" height="4.35" fill="#5a5a5a"/><rect x="389.50" y="17.10" width="20.4" height="4.35" fill="#5a5a5a"/><rect x="389.50" y="22.25" width="20.4" height="4.35" fill="#5a5a5a"/><rect x="411.10" y="1.0" width="20.4" height="5.0" fill="#12d812"/><rect x="411.10" y="6.80" width="20.4" height="4.35" fill="#5a5a5a"/><rect x="411.10" y="11.95" width="20.4" height="4.35" fill="#5a5a5a"/><rect x="411.10" y="17.10" width="20.4" height="4.35" fill="#5a5a5a"/><rect x="411.10" y="22.25" width="20.4" height="4.35" fill="#5a5a5a"/><rect x="432.70" y="1.0" width="20.4" height="5.0" fill="#12d812"/><rect x="432.70" y="6.80" width="20.4" height="4.35" fill="#5a5a5a"/><rect x="432.70" y="11.95" width="20.4" height="4.35" fill="#5a5a5a"/><rect x="432.70" y="17.10" width="20.4" height="4.35" fill="#5a5a5a"/><rect x="432.70" y="22.25" width="20.4" height="4.35" fill="#5a5a5a"/><rect x="454.30" y="1.0" width="20.4" height="5.0" fill="#12d812"/><rect x="454.30" y="6.80" width="20.4" height="4.35" fill="#5a5a5a"/><rect x="454.30" y="11.95" width="20.4" height="4.35" fill="#5a5a5a"/><rect x="454.30" y="17.10" width="20.4" height="4.35" fill="#5a5a5a"/><rect x="454.30" y="22.25" width="20.4" height="4.35" fill="#5a5a5a"/><rect x="475.90" y="1.0" width="20.4" height="5.0" fill="#12d812"/><rect x="475.90" y="6.80" width="20.4" height="4.35" fill="#5a5a5a"/><rect x="475.90" y="11.95" width="20.4" height="4.35" fill="#5a5a5a"/><rect x="475.90" y="17.10" width="20.4" height="4.35" fill="#5a5a5a"/><rect x="475.90" y="22.25" width="20.4" height="4.35" fill="#5a5a5a"/><rect x="497.50" y="1.0" width="20.4" height="5.0" fill="#12d812"/><rect x="497.50" y="6.80" width="20.4" height="4.35" fill="#5a5a5a"/><rect x="497.50" y="11.95" width="20.4" height="4.35" fill="#5a5a5a"/><rect x="497.50" y="17.10" width="20.4" height="4.35" fill="#5a5a5a"/><rect x="497.50" y="22.25" width="20.4" height="4.35" fill="#5a5a5a"/></svg>
<svg style="left:1255.00px;top:530.26px" width="30" height="28" viewBox="0 0 30 28"><path d="M14.2 10.6 L19.4 4.6" stroke="#f4f4f4" stroke-width="3.4" stroke-linecap="round"/><path d="M14.9 9.8 L18.7 5.4" stroke="#151515" stroke-width="1.0" stroke-linecap="round"/><rect x="6.2" y="9.8" width="16.6" height="3.8" rx="1.3" fill="#151515" stroke="#f4f4f4" stroke-width="1.5"/><path d="M7.6 13.6 V20.4 Q7.6 21.9 9.1 21.9 H19.9 Q21.4 21.9 21.4 20.4 V13.6" fill="#151515" stroke="#f4f4f4" stroke-width="1.6"/><path d="M7.6 14.7 H21.4" stroke="#f4f4f4" stroke-width="1.3"/><path d="M11.1 15 V21.2 M14.5 15 V21.2 M17.9 15 V21.2" stroke="#f4f4f4" stroke-width="1.5"/></svg>
<div class="abs" style="left:645.30px;top:562.92px;width:656.00px;height:1.30px;background:#7c808a;"></div>
<div class="abs" style="left:1242.00px;top:562.92px;width:1.30px;height:34.30px;background:#7c808a;"></div>
<svg style="left:647.80px;top:572.72px" width="13" height="13" viewBox="0 0 13 13"><rect x="0.85" y="0.85" width="11.30" height="11.30" rx="2.2" fill="none" stroke="#f0f0f0" stroke-width="1.7"/></svg>
<div class="t" style="left:665.30px;top:574.55px;font-size:9.30px;color:#d0d0d0;font-weight:normal;transform:scale(1.0,1.1);transform-origin:0 7.87px;">Wto.</div>
<svg style="left:716.20px;top:566.00px" width="519" height="28" viewBox="0 0 519 28"><rect x="0" y="0" width="519" height="28" fill="#2a2a2c"/><rect x="0.70" y="1.0" width="20.4" height="5.0" fill="#12d812"/><rect x="0.70" y="6.80" width="20.4" height="4.35" fill="#5a5a5a"/><rect x="0.70" y="11.95" width="20.4" height="4.35" fill="#5a5a5a"/><rect x="0.70" y="17.10" width="20.4" height="4.35" fill="#5a5a5a"/><rect x="0.70" y="22.25" width="20.4" height="4.35" fill="#5a5a5a"/><rect x="22.30" y="1.0" width="20.4" height="5.0" fill="#12d812"/><rect x="22.30" y="6.80" width="20.4" height="4.35" fill="#5a5a5a"/><rect x="22.30" y="11.95" width="20.4" height="4.35" fill="#5a5a5a"/><rect x="22.30" y="17.10" width="20.4" height="4.35" fill="#5a5a5a"/><rect x="22.30" y="22.25" width="20.4" height="4.35" fill="#5a5a5a"/><rect x="43.90" y="1.0" width="20.4" height="5.0" fill="#12d812"/><rect x="43.90" y="6.80" width="20.4" height="4.35" fill="#5a5a5a"/><rect x="43.90" y="11.95" width="20.4" height="4.35" fill="#5a5a5a"/><rect x="43.90" y="17.10" width="20.4" height="4.35" fill="#5a5a5a"/><rect x="43.90" y="22.25" width="20.4" height="4.35" fill="#5a5a5a"/><rect x="65.50" y="1.0" width="20.4" height="5.0" fill="#12d812"/><rect x="65.50" y="6.80" width="20.4" height="4.35" fill="#5a5a5a"/><rect x="65.50" y="11.95" width="20.4" height="4.35" fill="#5a5a5a"/><rect x="65.50" y="17.10" width="20.4" height="4.35" fill="#5a5a5a"/><rect x="65.50" y="22.25" width="20.4" height="4.35" fill="#5a5a5a"/><rect x="87.10" y="1.0" width="20.4" height="5.0" fill="#12d812"/><rect x="87.10" y="6.80" width="20.4" height="4.35" fill="#5a5a5a"/><rect x="87.10" y="11.95" width="20.4" height="4.35" fill="#5a5a5a"/><rect x="87.10" y="17.10" width="20.4" height="4.35" fill="#5a5a5a"/><rect x="87.10" y="22.25" width="20.4" height="4.35" fill="#5a5a5a"/><rect x="108.70" y="1.0" width="20.4" height="5.0" fill="#12d812"/><rect x="108.70" y="6.80" width="20.4" height="4.35" fill="#5a5a5a"/><rect x="108.70" y="11.95" width="20.4" height="4.35" fill="#5a5a5a"/><rect x="108.70" y="17.10" width="20.4" height="4.35" fill="#5a5a5a"/><rect x="108.70" y="22.25" width="20.4" height="4.35" fill="#5a5a5a"/><rect x="130.30" y="1.0" width="20.4" height="5.0" fill="#12d812"/><rect x="130.30" y="6.80" width="20.4" height="4.35" fill="#5a5a5a"/><rect x="130.30" y="11.95" width="20.4" height="4.35" fill="#5a5a5a"/><rect x="130.30" y="17.10" width="20.4" height="4.35" fill="#5a5a5a"/><rect x="130.30" y="22.25" width="20.4" height="4.35" fill="#5a5a5a"/><rect x="151.90" y="1.0" width="20.4" height="5.0" fill="#12d812"/><rect x="151.90" y="6.80" width="20.4" height="4.35" fill="#5a5a5a"/><rect x="151.90" y="11.95" width="20.4" height="4.35" fill="#5a5a5a"/><rect x="151.90" y="17.10" width="20.4" height="4.35" fill="#5a5a5a"/><rect x="151.90" y="22.25" width="20.4" height="4.35" fill="#5a5a5a"/><rect x="173.50" y="1.0" width="20.4" height="5.0" fill="#12d812"/><rect x="173.50" y="6.80" width="20.4" height="4.35" fill="#5a5a5a"/><rect x="173.50" y="11.95" width="20.4" height="4.35" fill="#5a5a5a"/><rect x="173.50" y="17.10" width="20.4" height="4.35" fill="#5a5a5a"/><rect x="173.50" y="22.25" width="20.4" height="4.35" fill="#5a5a5a"/><rect x="195.10" y="1.0" width="20.4" height="5.0" fill="#12d812"/><rect x="195.10" y="6.80" width="20.4" height="4.35" fill="#5a5a5a"/><rect x="195.10" y="11.95" width="20.4" height="4.35" fill="#5a5a5a"/><rect x="195.10" y="17.10" width="20.4" height="4.35" fill="#5a5a5a"/><rect x="195.10" y="22.25" width="20.4" height="4.35" fill="#5a5a5a"/><rect x="216.70" y="1.0" width="20.4" height="5.0" fill="#12d812"/><rect x="216.70" y="6.80" width="20.4" height="4.35" fill="#5a5a5a"/><rect x="216.70" y="11.95" width="20.4" height="4.35" fill="#5a5a5a"/><rect x="216.70" y="17.10" width="20.4" height="4.35" fill="#5a5a5a"/><rect x="216.70" y="22.25" width="20.4" height="4.35" fill="#5a5a5a"/><rect x="238.30" y="1.0" width="20.4" height="5.0" fill="#12d812"/><rect x="238.30" y="6.80" width="20.4" height="4.35" fill="#5a5a5a"/><rect x="238.30" y="11.95" width="20.4" height="4.35" fill="#5a5a5a"/><rect x="238.30" y="17.10" width="20.4" height="4.35" fill="#5a5a5a"/><rect x="238.30" y="22.25" width="20.4" height="4.35" fill="#5a5a5a"/><rect x="259.90" y="1.0" width="20.4" height="5.0" fill="#12d812"/><rect x="259.90" y="6.80" width="20.4" height="4.35" fill="#5a5a5a"/><rect x="259.90" y="11.95" width="20.4" height="4.35" fill="#5a5a5a"/><rect x="259.90" y="17.10" width="20.4" height="4.35" fill="#5a5a5a"/><rect x="259.90" y="22.25" width="20.4" height="4.35" fill="#5a5a5a"/><rect x="281.50" y="1.0" width="20.4" height="5.0" fill="#12d812"/><rect x="281.50" y="6.80" width="20.4" height="4.35" fill="#5a5a5a"/><rect x="281.50" y="11.95" width="20.4" height="4.35" fill="#5a5a5a"/><rect x="281.50" y="17.10" width="20.4" height="4.35" fill="#5a5a5a"/><rect x="281.50" y="22.25" width="20.4" height="4.35" fill="#5a5a5a"/><rect x="303.10" y="1.0" width="20.4" height="5.0" fill="#12d812"/><rect x="303.10" y="6.80" width="20.4" height="4.35" fill="#5a5a5a"/><rect x="303.10" y="11.95" width="20.4" height="4.35" fill="#5a5a5a"/><rect x="303.10" y="17.10" width="20.4" height="4.35" fill="#5a5a5a"/><rect x="303.10" y="22.25" width="20.4" height="4.35" fill="#5a5a5a"/><rect x="324.70" y="1.0" width="20.4" height="5.0" fill="#12d812"/><rect x="324.70" y="6.80" width="20.4" height="4.35" fill="#5a5a5a"/><rect x="324.70" y="11.95" width="20.4" height="4.35" fill="#5a5a5a"/><rect x="324.70" y="17.10" width="20.4" height="4.35" fill="#5a5a5a"/><rect x="324.70" y="22.25" width="20.4" height="4.35" fill="#5a5a5a"/><rect x="346.30" y="1.0" width="20.4" height="5.0" fill="#12d812"/><rect x="346.30" y="6.80" width="20.4" height="4.35" fill="#5a5a5a"/><rect x="346.30" y="11.95" width="20.4" height="4.35" fill="#5a5a5a"/><rect x="346.30" y="17.10" width="20.4" height="4.35" fill="#5a5a5a"/><rect x="346.30" y="22.25" width="20.4" height="4.35" fill="#5a5a5a"/><rect x="367.90" y="1.0" width="20.4" height="5.0" fill="#12d812"/><rect x="367.90" y="6.80" width="20.4" height="4.35" fill="#5a5a5a"/><rect x="367.90" y="11.95" width="20.4" height="4.35" fill="#5a5a5a"/><rect x="367.90" y="17.10" width="20.4" height="4.35" fill="#5a5a5a"/><rect x="367.90" y="22.25" width="20.4" height="4.35" fill="#5a5a5a"/><rect x="389.50" y="1.0" width="20.4" height="5.0" fill="#12d812"/><rect x="389.50" y="6.80" width="20.4" height="4.35" fill="#5a5a5a"/><rect x="389.50" y="11.95" width="20.4" height="4.35" fill="#5a5a5a"/><rect x="389.50" y="17.10" width="20.4" height="4.35" fill="#5a5a5a"/><rect x="389.50" y="22.25" width="20.4" height="4.35" fill="#5a5a5a"/><rect x="411.10" y="1.0" width="20.4" height="5.0" fill="#12d812"/><rect x="411.10" y="6.80" width="20.4" height="4.35" fill="#5a5a5a"/><rect x="411.10" y="11.95" width="20.4" height="4.35" fill="#5a5a5a"/><rect x="411.10" y="17.10" width="20.4" height="4.35" fill="#5a5a5a"/><rect x="411.10" y="22.25" width="20.4" height="4.35" fill="#5a5a5a"/><rect x="432.70" y="1.0" width="20.4" height="5.0" fill="#12d812"/><rect x="432.70" y="6.80" width="20.4" height="4.35" fill="#5a5a5a"/><rect x="432.70" y="11.95" width="20.4" height="4.35" fill="#5a5a5a"/><rect x="432.70" y="17.10" width="20.4" height="4.35" fill="#5a5a5a"/><rect x="432.70" y="22.25" width="20.4" height="4.35" fill="#5a5a5a"/><rect x="454.30" y="1.0" width="20.4" height="5.0" fill="#12d812"/><rect x="454.30" y="6.80" width="20.4" height="4.35" fill="#5a5a5a"/><rect x="454.30" y="11.95" width="20.4" height="4.35" fill="#5a5a5a"/><rect x="454.30" y="17.10" width="20.4" height="4.35" fill="#5a5a5a"/><rect x="454.30" y="22.25" width="20.4" height="4.35" fill="#5a5a5a"/><rect x="475.90" y="1.0" width="20.4" height="5.0" fill="#12d812"/><rect x="475.90" y="6.80" width="20.4" height="4.35" fill="#5a5a5a"/><rect x="475.90" y="11.95" width="20.4" height="4.35" fill="#5a5a5a"/><rect x="475.90" y="17.10" width="20.4" height="4.35" fill="#5a5a5a"/><rect x="475.90" y="22.25" width="20.4" height="4.35" fill="#5a5a5a"/><rect x="497.50" y="1.0" width="20.4" height="5.0" fill="#12d812"/><rect x="497.50" y="6.80" width="20.4" height="4.35" fill="#5a5a5a"/><rect x="497.50" y="11.95" width="20.4" height="4.35" fill="#5a5a5a"/><rect x="497.50" y="17.10" width="20.4" height="4.35" fill="#5a5a5a"/><rect x="497.50" y="22.25" width="20.4" height="4.35" fill="#5a5a5a"/></svg>
<svg style="left:1255.00px;top:564.52px" width="30" height="28" viewBox="0 0 30 28"><path d="M14.2 10.6 L19.4 4.6" stroke="#f4f4f4" stroke-width="3.4" stroke-linecap="round"/><path d="M14.9 9.8 L18.7 5.4" stroke="#151515" stroke-width="1.0" stroke-linecap="round"/><rect x="6.2" y="9.8" width="16.6" height="3.8" rx="1.3" fill="#151515" stroke="#f4f4f4" stroke-width="1.5"/><path d="M7.6 13.6 V20.4 Q7.6 21.9 9.1 21.9 H19.9 Q21.4 21.9 21.4 20.4 V13.6" fill="#151515" stroke="#f4f4f4" stroke-width="1.6"/><path d="M7.6 14.7 H21.4" stroke="#f4f4f4" stroke-width="1.3"/><path d="M11.1 15 V21.2 M14.5 15 V21.2 M17.9 15 V21.2" stroke="#f4f4f4" stroke-width="1.5"/></svg>
<div class="abs" style="left:645.30px;top:597.18px;width:656.00px;height:1.30px;background:#7c808a;"></div>
<div class="abs" style="left:1242.00px;top:597.18px;width:1.30px;height:34.30px;background:#7c808a;"></div>
<svg style="left:647.80px;top:606.98px" width="13" height="13" viewBox="0 0 13 13"><rect x="0.85" y="0.85" width="11.30" height="11.30" rx="2.2" fill="none" stroke="#f0f0f0" stroke-width="1.7"/></svg>
<div class="t" style="left:665.30px;top:608.81px;font-size:9.30px;color:#d0d0d0;font-weight:normal;transform:scale(1.0,1.1);transform-origin:0 7.87px;">Śro.</div>
<svg style="left:716.20px;top:601.00px" width="519" height="28" viewBox="0 0 519 28"><rect x="0" y="0" width="519" height="28" fill="#2a2a2c"/><rect x="0.70" y="1.0" width="20.4" height="5.0" fill="#12d812"/><rect x="0.70" y="6.80" width="20.4" height="4.35" fill="#5a5a5a"/><rect x="0.70" y="11.95" width="20.4" height="4.35" fill="#5a5a5a"/><rect x="0.70" y="17.10" width="20.4" height="4.35" fill="#5a5a5a"/><rect x="0.70" y="22.25" width="20.4" height="4.35" fill="#5a5a5a"/><rect x="22.30" y="1.0" width="20.4" height="5.0" fill="#12d812"/><rect x="22.30" y="6.80" width="20.4" height="4.35" fill="#5a5a5a"/><rect x="22.30" y="11.95" width="20.4" height="4.35" fill="#5a5a5a"/><rect x="22.30" y="17.10" width="20.4" height="4.35" fill="#5a5a5a"/><rect x="22.30" y="22.25" width="20.4" height="4.35" fill="#5a5a5a"/><rect x="43.90" y="1.0" width="20.4" height="5.0" fill="#12d812"/><rect x="43.90" y="6.80" width="20.4" height="4.35" fill="#5a5a5a"/><rect x="43.90" y="11.95" width="20.4" height="4.35" fill="#5a5a5a"/><rect x="43.90" y="17.10" width="20.4" height="4.35" fill="#5a5a5a"/><rect x="43.90" y="22.25" width="20.4" height="4.35" fill="#5a5a5a"/><rect x="65.50" y="1.0" width="20.4" height="5.0" fill="#12d812"/><rect x="65.50" y="6.80" width="20.4" height="4.35" fill="#5a5a5a"/><rect x="65.50" y="11.95" width="20.4" height="4.35" fill="#5a5a5a"/><rect x="65.50" y="17.10" width="20.4" height="4.35" fill="#5a5a5a"/><rect x="65.50" y="22.25" width="20.4" height="4.35" fill="#5a5a5a"/><rect x="87.10" y="1.0" width="20.4" height="5.0" fill="#12d812"/><rect x="87.10" y="6.80" width="20.4" height="4.35" fill="#5a5a5a"/><rect x="87.10" y="11.95" width="20.4" height="4.35" fill="#5a5a5a"/><rect x="87.10" y="17.10" width="20.4" height="4.35" fill="#5a5a5a"/><rect x="87.10" y="22.25" width="20.4" height="4.35" fill="#5a5a5a"/><rect x="108.70" y="1.0" width="20.4" height="5.0" fill="#12d812"/><rect x="108.70" y="6.80" width="20.4" height="4.35" fill="#5a5a5a"/><rect x="108.70" y="11.95" width="20.4" height="4.35" fill="#5a5a5a"/><rect x="108.70" y="17.10" width="20.4" height="4.35" fill="#5a5a5a"/><rect x="108.70" y="22.25" width="20.4" height="4.35" fill="#5a5a5a"/><rect x="130.30" y="1.0" width="20.4" height="5.0" fill="#12d812"/><rect x="130.30" y="6.80" width="20.4" height="4.35" fill="#5a5a5a"/><rect x="130.30" y="11.95" width="20.4" height="4.35" fill="#5a5a5a"/><rect x="130.30" y="17.10" width="20.4" height="4.35" fill="#5a5a5a"/><rect x="130.30" y="22.25" width="20.4" height="4.35" fill="#5a5a5a"/><rect x="151.90" y="1.0" width="20.4" height="5.0" fill="#12d812"/><rect x="151.90" y="6.80" width="20.4" height="4.35" fill="#5a5a5a"/><rect x="151.90" y="11.95" width="20.4" height="4.35" fill="#5a5a5a"/><rect x="151.90" y="17.10" width="20.4" height="4.35" fill="#5a5a5a"/><rect x="151.90" y="22.25" width="20.4" height="4.35" fill="#5a5a5a"/><rect x="173.50" y="1.0" width="20.4" height="5.0" fill="#12d812"/><rect x="173.50" y="6.80" width="20.4" height="4.35" fill="#5a5a5a"/><rect x="173.50" y="11.95" width="20.4" height="4.35" fill="#5a5a5a"/><rect x="173.50" y="17.10" width="20.4" height="4.35" fill="#5a5a5a"/><rect x="173.50" y="22.25" width="20.4" height="4.35" fill="#5a5a5a"/><rect x="195.10" y="1.0" width="20.4" height="5.0" fill="#12d812"/><rect x="195.10" y="6.80" width="20.4" height="4.35" fill="#5a5a5a"/><rect x="195.10" y="11.95" width="20.4" height="4.35" fill="#5a5a5a"/><rect x="195.10" y="17.10" width="20.4" height="4.35" fill="#5a5a5a"/><rect x="195.10" y="22.25" width="20.4" height="4.35" fill="#5a5a5a"/><rect x="216.70" y="1.0" width="20.4" height="5.0" fill="#12d812"/><rect x="216.70" y="6.80" width="20.4" height="4.35" fill="#5a5a5a"/><rect x="216.70" y="11.95" width="20.4" height="4.35" fill="#5a5a5a"/><rect x="216.70" y="17.10" width="20.4" height="4.35" fill="#5a5a5a"/><rect x="216.70" y="22.25" width="20.4" height="4.35" fill="#5a5a5a"/><rect x="238.30" y="1.0" width="20.4" height="5.0" fill="#12d812"/><rect x="238.30" y="6.80" width="20.4" height="4.35" fill="#5a5a5a"/><rect x="238.30" y="11.95" width="20.4" height="4.35" fill="#5a5a5a"/><rect x="238.30" y="17.10" width="20.4" height="4.35" fill="#5a5a5a"/><rect x="238.30" y="22.25" width="20.4" height="4.35" fill="#5a5a5a"/><rect x="259.90" y="1.0" width="20.4" height="5.0" fill="#12d812"/><rect x="259.90" y="6.80" width="20.4" height="4.35" fill="#5a5a5a"/><rect x="259.90" y="11.95" width="20.4" height="4.35" fill="#5a5a5a"/><rect x="259.90" y="17.10" width="20.4" height="4.35" fill="#5a5a5a"/><rect x="259.90" y="22.25" width="20.4" height="4.35" fill="#5a5a5a"/><rect x="281.50" y="1.0" width="20.4" height="5.0" fill="#12d812"/><rect x="281.50" y="6.80" width="20.4" height="4.35" fill="#5a5a5a"/><rect x="281.50" y="11.95" width="20.4" height="4.35" fill="#5a5a5a"/><rect x="281.50" y="17.10" width="20.4" height="4.35" fill="#5a5a5a"/><rect x="281.50" y="22.25" width="20.4" height="4.35" fill="#5a5a5a"/><rect x="303.10" y="1.0" width="20.4" height="5.0" fill="#12d812"/><rect x="303.10" y="6.80" width="20.4" height="4.35" fill="#5a5a5a"/><rect x="303.10" y="11.95" width="20.4" height="4.35" fill="#5a5a5a"/><rect x="303.10" y="17.10" width="20.4" height="4.35" fill="#5a5a5a"/><rect x="303.10" y="22.25" width="20.4" height="4.35" fill="#5a5a5a"/><rect x="324.70" y="1.0" width="20.4" height="5.0" fill="#12d812"/><rect x="324.70" y="6.80" width="20.4" height="4.35" fill="#5a5a5a"/><rect x="324.70" y="11.95" width="20.4" height="4.35" fill="#5a5a5a"/><rect x="324.70" y="17.10" width="20.4" height="4.35" fill="#5a5a5a"/><rect x="324.70" y="22.25" width="20.4" height="4.35" fill="#5a5a5a"/><rect x="346.30" y="1.0" width="20.4" height="5.0" fill="#12d812"/><rect x="346.30" y="6.80" width="20.4" height="4.35" fill="#5a5a5a"/><rect x="346.30" y="11.95" width="20.4" height="4.35" fill="#5a5a5a"/><rect x="346.30" y="17.10" width="20.4" height="4.35" fill="#5a5a5a"/><rect x="346.30" y="22.25" width="20.4" height="4.35" fill="#5a5a5a"/><rect x="367.90" y="1.0" width="20.4" height="5.0" fill="#12d812"/><rect x="367.90" y="6.80" width="20.4" height="4.35" fill="#5a5a5a"/><rect x="367.90" y="11.95" width="20.4" height="4.35" fill="#5a5a5a"/><rect x="367.90" y="17.10" width="20.4" height="4.35" fill="#5a5a5a"/><rect x="367.90" y="22.25" width="20.4" height="4.35" fill="#5a5a5a"/><rect x="389.50" y="1.0" width="20.4" height="5.0" fill="#12d812"/><rect x="389.50" y="6.80" width="20.4" height="4.35" fill="#5a5a5a"/><rect x="389.50" y="11.95" width="20.4" height="4.35" fill="#5a5a5a"/><rect x="389.50" y="17.10" width="20.4" height="4.35" fill="#5a5a5a"/><rect x="389.50" y="22.25" width="20.4" height="4.35" fill="#5a5a5a"/><rect x="411.10" y="1.0" width="20.4" height="5.0" fill="#12d812"/><rect x="411.10" y="6.80" width="20.4" height="4.35" fill="#5a5a5a"/><rect x="411.10" y="11.95" width="20.4" height="4.35" fill="#5a5a5a"/><rect x="411.10" y="17.10" width="20.4" height="4.35" fill="#5a5a5a"/><rect x="411.10" y="22.25" width="20.4" height="4.35" fill="#5a5a5a"/><rect x="432.70" y="1.0" width="20.4" height="5.0" fill="#12d812"/><rect x="432.70" y="6.80" width="20.4" height="4.35" fill="#5a5a5a"/><rect x="432.70" y="11.95" width="20.4" height="4.35" fill="#5a5a5a"/><rect x="432.70" y="17.10" width="20.4" height="4.35" fill="#5a5a5a"/><rect x="432.70" y="22.25" width="20.4" height="4.35" fill="#5a5a5a"/><rect x="454.30" y="1.0" width="20.4" height="5.0" fill="#12d812"/><rect x="454.30" y="6.80" width="20.4" height="4.35" fill="#5a5a5a"/><rect x="454.30" y="11.95" width="20.4" height="4.35" fill="#5a5a5a"/><rect x="454.30" y="17.10" width="20.4" height="4.35" fill="#5a5a5a"/><rect x="454.30" y="22.25" width="20.4" height="4.35" fill="#5a5a5a"/><rect x="475.90" y="1.0" width="20.4" height="5.0" fill="#12d812"/><rect x="475.90" y="6.80" width="20.4" height="4.35" fill="#5a5a5a"/><rect x="475.90" y="11.95" width="20.4" height="4.35" fill="#5a5a5a"/><rect x="475.90" y="17.10" width="20.4" height="4.35" fill="#5a5a5a"/><rect x="475.90" y="22.25" width="20.4" height="4.35" fill="#5a5a5a"/><rect x="497.50" y="1.0" width="20.4" height="5.0" fill="#12d812"/><rect x="497.50" y="6.80" width="20.4" height="4.35" fill="#5a5a5a"/><rect x="497.50" y="11.95" width="20.4" height="4.35" fill="#5a5a5a"/><rect x="497.50" y="17.10" width="20.4" height="4.35" fill="#5a5a5a"/><rect x="497.50" y="22.25" width="20.4" height="4.35" fill="#5a5a5a"/></svg>
<svg style="left:1255.00px;top:598.78px" width="30" height="28" viewBox="0 0 30 28"><path d="M14.2 10.6 L19.4 4.6" stroke="#f4f4f4" stroke-width="3.4" stroke-linecap="round"/><path d="M14.9 9.8 L18.7 5.4" stroke="#151515" stroke-width="1.0" stroke-linecap="round"/><rect x="6.2" y="9.8" width="16.6" height="3.8" rx="1.3" fill="#151515" stroke="#f4f4f4" stroke-width="1.5"/><path d="M7.6 13.6 V20.4 Q7.6 21.9 9.1 21.9 H19.9 Q21.4 21.9 21.4 20.4 V13.6" fill="#151515" stroke="#f4f4f4" stroke-width="1.6"/><path d="M7.6 14.7 H21.4" stroke="#f4f4f4" stroke-width="1.3"/><path d="M11.1 15 V21.2 M14.5 15 V21.2 M17.9 15 V21.2" stroke="#f4f4f4" stroke-width="1.5"/></svg>
<div class="abs" style="left:645.30px;top:631.44px;width:656.00px;height:1.30px;background:#7c808a;"></div>
<div class="abs" style="left:1242.00px;top:631.44px;width:1.30px;height:34.30px;background:#7c808a;"></div>
<svg style="left:647.80px;top:641.24px" width="13" height="13" viewBox="0 0 13 13"><rect x="0.85" y="0.85" width="11.30" height="11.30" rx="2.2" fill="none" stroke="#f0f0f0" stroke-width="1.7"/></svg>
<div class="t" style="left:665.30px;top:643.07px;font-size:9.30px;color:#d0d0d0;font-weight:normal;transform:scale(1.0,1.1);transform-origin:0 7.87px;">Czw.</div>
<svg style="left:716.20px;top:636.00px" width="519" height="28" viewBox="0 0 519 28"><rect x="0" y="0" width="519" height="28" fill="#2a2a2c"/><rect x="0.70" y="1.0" width="20.4" height="5.0" fill="#12d812"/><rect x="0.70" y="6.80" width="20.4" height="4.35" fill="#5a5a5a"/><rect x="0.70" y="11.95" width="20.4" height="4.35" fill="#5a5a5a"/><rect x="0.70" y="17.10" width="20.4" height="4.35" fill="#5a5a5a"/><rect x="0.70" y="22.25" width="20.4" height="4.35" fill="#5a5a5a"/><rect x="22.30" y="1.0" width="20.4" height="5.0" fill="#12d812"/><rect x="22.30" y="6.80" width="20.4" height="4.35" fill="#5a5a5a"/><rect x="22.30" y="11.95" width="20.4" height="4.35" fill="#5a5a5a"/><rect x="22.30" y="17.10" width="20.4" height="4.35" fill="#5a5a5a"/><rect x="22.30" y="22.25" width="20.4" height="4.35" fill="#5a5a5a"/><rect x="43.90" y="1.0" width="20.4" height="5.0" fill="#12d812"/><rect x="43.90" y="6.80" width="20.4" height="4.35" fill="#5a5a5a"/><rect x="43.90" y="11.95" width="20.4" height="4.35" fill="#5a5a5a"/><rect x="43.90" y="17.10" width="20.4" height="4.35" fill="#5a5a5a"/><rect x="43.90" y="22.25" width="20.4" height="4.35" fill="#5a5a5a"/><rect x="65.50" y="1.0" width="20.4" height="5.0" fill="#12d812"/><rect x="65.50" y="6.80" width="20.4" height="4.35" fill="#5a5a5a"/><rect x="65.50" y="11.95" width="20.4" height="4.35" fill="#5a5a5a"/><rect x="65.50" y="17.10" width="20.4" height="4.35" fill="#5a5a5a"/><rect x="65.50" y="22.25" width="20.4" height="4.35" fill="#5a5a5a"/><rect x="87.10" y="1.0" width="20.4" height="5.0" fill="#12d812"/><rect x="87.10" y="6.80" width="20.4" height="4.35" fill="#5a5a5a"/><rect x="87.10" y="11.95" width="20.4" height="4.35" fill="#5a5a5a"/><rect x="87.10" y="17.10" width="20.4" height="4.35" fill="#5a5a5a"/><rect x="87.10" y="22.25" width="20.4" height="4.35" fill="#5a5a5a"/><rect x="108.70" y="1.0" width="20.4" height="5.0" fill="#12d812"/><rect x="108.70" y="6.80" width="20.4" height="4.35" fill="#5a5a5a"/><rect x="108.70" y="11.95" width="20.4" height="4.35" fill="#5a5a5a"/><rect x="108.70" y="17.10" width="20.4" height="4.35" fill="#5a5a5a"/><rect x="108.70" y="22.25" width="20.4" height="4.35" fill="#5a5a5a"/><rect x="130.30" y="1.0" width="20.4" height="5.0" fill="#12d812"/><rect x="130.30" y="6.80" width="20.4" height="4.35" fill="#5a5a5a"/><rect x="130.30" y="11.95" width="20.4" height="4.35" fill="#5a5a5a"/><rect x="130.30" y="17.10" width="20.4" height="4.35" fill="#5a5a5a"/><rect x="130.30" y="22.25" width="20.4" height="4.35" fill="#5a5a5a"/><rect x="151.90" y="1.0" width="20.4" height="5.0" fill="#12d812"/><rect x="151.90" y="6.80" width="20.4" height="4.35" fill="#5a5a5a"/><rect x="151.90" y="11.95" width="20.4" height="4.35" fill="#5a5a5a"/><rect x="151.90" y="17.10" width="20.4" height="4.35" fill="#5a5a5a"/><rect x="151.90" y="22.25" width="20.4" height="4.35" fill="#5a5a5a"/><rect x="173.50" y="1.0" width="20.4" height="5.0" fill="#12d812"/><rect x="173.50" y="6.80" width="20.4" height="4.35" fill="#5a5a5a"/><rect x="173.50" y="11.95" width="20.4" height="4.35" fill="#5a5a5a"/><rect x="173.50" y="17.10" width="20.4" height="4.35" fill="#5a5a5a"/><rect x="173.50" y="22.25" width="20.4" height="4.35" fill="#5a5a5a"/><rect x="195.10" y="1.0" width="20.4" height="5.0" fill="#12d812"/><rect x="195.10" y="6.80" width="20.4" height="4.35" fill="#5a5a5a"/><rect x="195.10" y="11.95" width="20.4" height="4.35" fill="#5a5a5a"/><rect x="195.10" y="17.10" width="20.4" height="4.35" fill="#5a5a5a"/><rect x="195.10" y="22.25" width="20.4" height="4.35" fill="#5a5a5a"/><rect x="216.70" y="1.0" width="20.4" height="5.0" fill="#12d812"/><rect x="216.70" y="6.80" width="20.4" height="4.35" fill="#5a5a5a"/><rect x="216.70" y="11.95" width="20.4" height="4.35" fill="#5a5a5a"/><rect x="216.70" y="17.10" width="20.4" height="4.35" fill="#5a5a5a"/><rect x="216.70" y="22.25" width="20.4" height="4.35" fill="#5a5a5a"/><rect x="238.30" y="1.0" width="20.4" height="5.0" fill="#12d812"/><rect x="238.30" y="6.80" width="20.4" height="4.35" fill="#5a5a5a"/><rect x="238.30" y="11.95" width="20.4" height="4.35" fill="#5a5a5a"/><rect x="238.30" y="17.10" width="20.4" height="4.35" fill="#5a5a5a"/><rect x="238.30" y="22.25" width="20.4" height="4.35" fill="#5a5a5a"/><rect x="259.90" y="1.0" width="20.4" height="5.0" fill="#12d812"/><rect x="259.90" y="6.80" width="20.4" height="4.35" fill="#5a5a5a"/><rect x="259.90" y="11.95" width="20.4" height="4.35" fill="#5a5a5a"/><rect x="259.90" y="17.10" width="20.4" height="4.35" fill="#5a5a5a"/><rect x="259.90" y="22.25" width="20.4" height="4.35" fill="#5a5a5a"/><rect x="281.50" y="1.0" width="20.4" height="5.0" fill="#12d812"/><rect x="281.50" y="6.80" width="20.4" height="4.35" fill="#5a5a5a"/><rect x="281.50" y="11.95" width="20.4" height="4.35" fill="#5a5a5a"/><rect x="281.50" y="17.10" width="20.4" height="4.35" fill="#5a5a5a"/><rect x="281.50" y="22.25" width="20.4" height="4.35" fill="#5a5a5a"/><rect x="303.10" y="1.0" width="20.4" height="5.0" fill="#12d812"/><rect x="303.10" y="6.80" width="20.4" height="4.35" fill="#5a5a5a"/><rect x="303.10" y="11.95" width="20.4" height="4.35" fill="#5a5a5a"/><rect x="303.10" y="17.10" width="20.4" height="4.35" fill="#5a5a5a"/><rect x="303.10" y="22.25" width="20.4" height="4.35" fill="#5a5a5a"/><rect x="324.70" y="1.0" width="20.4" height="5.0" fill="#12d812"/><rect x="324.70" y="6.80" width="20.4" height="4.35" fill="#5a5a5a"/><rect x="324.70" y="11.95" width="20.4" height="4.35" fill="#5a5a5a"/><rect x="324.70" y="17.10" width="20.4" height="4.35" fill="#5a5a5a"/><rect x="324.70" y="22.25" width="20.4" height="4.35" fill="#5a5a5a"/><rect x="346.30" y="1.0" width="20.4" height="5.0" fill="#12d812"/><rect x="346.30" y="6.80" width="20.4" height="4.35" fill="#5a5a5a"/><rect x="346.30" y="11.95" width="20.4" height="4.35" fill="#5a5a5a"/><rect x="346.30" y="17.10" width="20.4" height="4.35" fill="#5a5a5a"/><rect x="346.30" y="22.25" width="20.4" height="4.35" fill="#5a5a5a"/><rect x="367.90" y="1.0" width="20.4" height="5.0" fill="#12d812"/><rect x="367.90" y="6.80" width="20.4" height="4.35" fill="#5a5a5a"/><rect x="367.90" y="11.95" width="20.4" height="4.35" fill="#5a5a5a"/><rect x="367.90" y="17.10" width="20.4" height="4.35" fill="#5a5a5a"/><rect x="367.90" y="22.25" width="20.4" height="4.35" fill="#5a5a5a"/><rect x="389.50" y="1.0" width="20.4" height="5.0" fill="#12d812"/><rect x="389.50" y="6.80" width="20.4" height="4.35" fill="#5a5a5a"/><rect x="389.50" y="11.95" width="20.4" height="4.35" fill="#5a5a5a"/><rect x="389.50" y="17.10" width="20.4" height="4.35" fill="#5a5a5a"/><rect x="389.50" y="22.25" width="20.4" height="4.35" fill="#5a5a5a"/><rect x="411.10" y="1.0" width="20.4" height="5.0" fill="#12d812"/><rect x="411.10" y="6.80" width="20.4" height="4.35" fill="#5a5a5a"/><rect x="411.10" y="11.95" width="20.4" height="4.35" fill="#5a5a5a"/><rect x="411.10" y="17.10" width="20.4" height="4.35" fill="#5a5a5a"/><rect x="411.10" y="22.25" width="20.4" height="4.35" fill="#5a5a5a"/><rect x="432.70" y="1.0" width="20.4" height="5.0" fill="#12d812"/><rect x="432.70" y="6.80" width="20.4" height="4.35" fill="#5a5a5a"/><rect x="432.70" y="11.95" width="20.4" height="4.35" fill="#5a5a5a"/><rect x="432.70" y="17.10" width="20.4" height="4.35" fill="#5a5a5a"/><rect x="432.70" y="22.25" width="20.4" height="4.35" fill="#5a5a5a"/><rect x="454.30" y="1.0" width="20.4" height="5.0" fill="#12d812"/><rect x="454.30" y="6.80" width="20.4" height="4.35" fill="#5a5a5a"/><rect x="454.30" y="11.95" width="20.4" height="4.35" fill="#5a5a5a"/><rect x="454.30" y="17.10" width="20.4" height="4.35" fill="#5a5a5a"/><rect x="454.30" y="22.25" width="20.4" height="4.35" fill="#5a5a5a"/><rect x="475.90" y="1.0" width="20.4" height="5.0" fill="#12d812"/><rect x="475.90" y="6.80" width="20.4" height="4.35" fill="#5a5a5a"/><rect x="475.90" y="11.95" width="20.4" height="4.35" fill="#5a5a5a"/><rect x="475.90" y="17.10" width="20.4" height="4.35" fill="#5a5a5a"/><rect x="475.90" y="22.25" width="20.4" height="4.35" fill="#5a5a5a"/><rect x="497.50" y="1.0" width="20.4" height="5.0" fill="#12d812"/><rect x="497.50" y="6.80" width="20.4" height="4.35" fill="#5a5a5a"/><rect x="497.50" y="11.95" width="20.4" height="4.35" fill="#5a5a5a"/><rect x="497.50" y="17.10" width="20.4" height="4.35" fill="#5a5a5a"/><rect x="497.50" y="22.25" width="20.4" height="4.35" fill="#5a5a5a"/></svg>
<svg style="left:1255.00px;top:633.04px" width="30" height="28" viewBox="0 0 30 28"><path d="M14.2 10.6 L19.4 4.6" stroke="#f4f4f4" stroke-width="3.4" stroke-linecap="round"/><path d="M14.9 9.8 L18.7 5.4" stroke="#151515" stroke-width="1.0" stroke-linecap="round"/><rect x="6.2" y="9.8" width="16.6" height="3.8" rx="1.3" fill="#151515" stroke="#f4f4f4" stroke-width="1.5"/><path d="M7.6 13.6 V20.4 Q7.6 21.9 9.1 21.9 H19.9 Q21.4 21.9 21.4 20.4 V13.6" fill="#151515" stroke="#f4f4f4" stroke-width="1.6"/><path d="M7.6 14.7 H21.4" stroke="#f4f4f4" stroke-width="1.3"/><path d="M11.1 15 V21.2 M14.5 15 V21.2 M17.9 15 V21.2" stroke="#f4f4f4" stroke-width="1.5"/></svg>
<div class="abs" style="left:645.30px;top:665.70px;width:656.00px;height:1.30px;background:#7c808a;"></div>
<div class="abs" style="left:1242.00px;top:665.70px;width:1.30px;height:34.30px;background:#7c808a;"></div>
<svg style="left:647.80px;top:675.50px" width="13" height="13" viewBox="0 0 13 13"><rect x="0.85" y="0.85" width="11.30" height="11.30" rx="2.2" fill="none" stroke="#f0f0f0" stroke-width="1.7"/></svg>
<div class="t" style="left:665.30px;top:677.33px;font-size:9.30px;color:#d0d0d0;font-weight:normal;transform:scale(1.0,1.1);transform-origin:0 7.87px;">Pią.</div>
<svg style="left:716.20px;top:671.00px" width="519" height="28" viewBox="0 0 519 28"><rect x="0" y="0" width="519" height="28" fill="#2a2a2c"/><rect x="0.70" y="1.0" width="20.4" height="5.0" fill="#12d812"/><rect x="0.70" y="6.80" width="20.4" height="4.35" fill="#5a5a5a"/><rect x="0.70" y="11.95" width="20.4" height="4.35" fill="#5a5a5a"/><rect x="0.70" y="17.10" width="20.4" height="4.35" fill="#5a5a5a"/><rect x="0.70" y="22.25" width="20.4" height="4.35" fill="#5a5a5a"/><rect x="22.30" y="1.0" width="20.4" height="5.0" fill="#12d812"/><rect x="22.30" y="6.80" width="20.4" height="4.35" fill="#5a5a5a"/><rect x="22.30" y="11.95" width="20.4" height="4.35" fill="#5a5a5a"/><rect x="22.30" y="17.10" width="20.4" height="4.35" fill="#5a5a5a"/><rect x="22.30" y="22.25" width="20.4" height="4.35" fill="#5a5a5a"/><rect x="43.90" y="1.0" width="20.4" height="5.0" fill="#12d812"/><rect x="43.90" y="6.80" width="20.4" height="4.35" fill="#5a5a5a"/><rect x="43.90" y="11.95" width="20.4" height="4.35" fill="#5a5a5a"/><rect x="43.90" y="17.10" width="20.4" height="4.35" fill="#5a5a5a"/><rect x="43.90" y="22.25" width="20.4" height="4.35" fill="#5a5a5a"/><rect x="65.50" y="1.0" width="20.4" height="5.0" fill="#12d812"/><rect x="65.50" y="6.80" width="20.4" height="4.35" fill="#5a5a5a"/><rect x="65.50" y="11.95" width="20.4" height="4.35" fill="#5a5a5a"/><rect x="65.50" y="17.10" width="20.4" height="4.35" fill="#5a5a5a"/><rect x="65.50" y="22.25" width="20.4" height="4.35" fill="#5a5a5a"/><rect x="87.10" y="1.0" width="20.4" height="5.0" fill="#12d812"/><rect x="87.10" y="6.80" width="20.4" height="4.35" fill="#5a5a5a"/><rect x="87.10" y="11.95" width="20.4" height="4.35" fill="#5a5a5a"/><rect x="87.10" y="17.10" width="20.4" height="4.35" fill="#5a5a5a"/><rect x="87.10" y="22.25" width="20.4" height="4.35" fill="#5a5a5a"/><rect x="108.70" y="1.0" width="20.4" height="5.0" fill="#12d812"/><rect x="108.70" y="6.80" width="20.4" height="4.35" fill="#5a5a5a"/><rect x="108.70" y="11.95" width="20.4" height="4.35" fill="#5a5a5a"/><rect x="108.70" y="17.10" width="20.4" height="4.35" fill="#5a5a5a"/><rect x="108.70" y="22.25" width="20.4" height="4.35" fill="#5a5a5a"/><rect x="130.30" y="1.0" width="20.4" height="5.0" fill="#12d812"/><rect x="130.30" y="6.80" width="20.4" height="4.35" fill="#5a5a5a"/><rect x="130.30" y="11.95" width="20.4" height="4.35" fill="#5a5a5a"/><rect x="130.30" y="17.10" width="20.4" height="4.35" fill="#5a5a5a"/><rect x="130.30" y="22.25" width="20.4" height="4.35" fill="#5a5a5a"/><rect x="151.90" y="1.0" width="20.4" height="5.0" fill="#12d812"/><rect x="151.90" y="6.80" width="20.4" height="4.35" fill="#5a5a5a"/><rect x="151.90" y="11.95" width="20.4" height="4.35" fill="#5a5a5a"/><rect x="151.90" y="17.10" width="20.4" height="4.35" fill="#5a5a5a"/><rect x="151.90" y="22.25" width="20.4" height="4.35" fill="#5a5a5a"/><rect x="173.50" y="1.0" width="20.4" height="5.0" fill="#12d812"/><rect x="173.50" y="6.80" width="20.4" height="4.35" fill="#5a5a5a"/><rect x="173.50" y="11.95" width="20.4" height="4.35" fill="#5a5a5a"/><rect x="173.50" y="17.10" width="20.4" height="4.35" fill="#5a5a5a"/><rect x="173.50" y="22.25" width="20.4" height="4.35" fill="#5a5a5a"/><rect x="195.10" y="1.0" width="20.4" height="5.0" fill="#12d812"/><rect x="195.10" y="6.80" width="20.4" height="4.35" fill="#5a5a5a"/><rect x="195.10" y="11.95" width="20.4" height="4.35" fill="#5a5a5a"/><rect x="195.10" y="17.10" width="20.4" height="4.35" fill="#5a5a5a"/><rect x="195.10" y="22.25" width="20.4" height="4.35" fill="#5a5a5a"/><rect x="216.70" y="1.0" width="20.4" height="5.0" fill="#12d812"/><rect x="216.70" y="6.80" width="20.4" height="4.35" fill="#5a5a5a"/><rect x="216.70" y="11.95" width="20.4" height="4.35" fill="#5a5a5a"/><rect x="216.70" y="17.10" width="20.4" height="4.35" fill="#5a5a5a"/><rect x="216.70" y="22.25" width="20.4" height="4.35" fill="#5a5a5a"/><rect x="238.30" y="1.0" width="20.4" height="5.0" fill="#12d812"/><rect x="238.30" y="6.80" width="20.4" height="4.35" fill="#5a5a5a"/><rect x="238.30" y="11.95" width="20.4" height="4.35" fill="#5a5a5a"/><rect x="238.30" y="17.10" width="20.4" height="4.35" fill="#5a5a5a"/><rect x="238.30" y="22.25" width="20.4" height="4.35" fill="#5a5a5a"/><rect x="259.90" y="1.0" width="20.4" height="5.0" fill="#12d812"/><rect x="259.90" y="6.80" width="20.4" height="4.35" fill="#5a5a5a"/><rect x="259.90" y="11.95" width="20.4" height="4.35" fill="#5a5a5a"/><rect x="259.90" y="17.10" width="20.4" height="4.35" fill="#5a5a5a"/><rect x="259.90" y="22.25" width="20.4" height="4.35" fill="#5a5a5a"/><rect x="281.50" y="1.0" width="20.4" height="5.0" fill="#12d812"/><rect x="281.50" y="6.80" width="20.4" height="4.35" fill="#5a5a5a"/><rect x="281.50" y="11.95" width="20.4" height="4.35" fill="#5a5a5a"/><rect x="281.50" y="17.10" width="20.4" height="4.35" fill="#5a5a5a"/><rect x="281.50" y="22.25" width="20.4" height="4.35" fill="#5a5a5a"/><rect x="303.10" y="1.0" width="20.4" height="5.0" fill="#12d812"/><rect x="303.10" y="6.80" width="20.4" height="4.35" fill="#5a5a5a"/><rect x="303.10" y="11.95" width="20.4" height="4.35" fill="#5a5a5a"/><rect x="303.10" y="17.10" width="20.4" height="4.35" fill="#5a5a5a"/><rect x="303.10" y="22.25" width="20.4" height="4.35" fill="#5a5a5a"/><rect x="324.70" y="1.0" width="20.4" height="5.0" fill="#12d812"/><rect x="324.70" y="6.80" width="20.4" height="4.35" fill="#5a5a5a"/><rect x="324.70" y="11.95" width="20.4" height="4.35" fill="#5a5a5a"/><rect x="324.70" y="17.10" width="20.4" height="4.35" fill="#5a5a5a"/><rect x="324.70" y="22.25" width="20.4" height="4.35" fill="#5a5a5a"/><rect x="346.30" y="1.0" width="20.4" height="5.0" fill="#12d812"/><rect x="346.30" y="6.80" width="20.4" height="4.35" fill="#5a5a5a"/><rect x="346.30" y="11.95" width="20.4" height="4.35" fill="#5a5a5a"/><rect x="346.30" y="17.10" width="20.4" height="4.35" fill="#5a5a5a"/><rect x="346.30" y="22.25" width="20.4" height="4.35" fill="#5a5a5a"/><rect x="367.90" y="1.0" width="20.4" height="5.0" fill="#12d812"/><rect x="367.90" y="6.80" width="20.4" height="4.35" fill="#5a5a5a"/><rect x="367.90" y="11.95" width="20.4" height="4.35" fill="#5a5a5a"/><rect x="367.90" y="17.10" width="20.4" height="4.35" fill="#5a5a5a"/><rect x="367.90" y="22.25" width="20.4" height="4.35" fill="#5a5a5a"/><rect x="389.50" y="1.0" width="20.4" height="5.0" fill="#12d812"/><rect x="389.50" y="6.80" width="20.4" height="4.35" fill="#5a5a5a"/><rect x="389.50" y="11.95" width="20.4" height="4.35" fill="#5a5a5a"/><rect x="389.50" y="17.10" width="20.4" height="4.35" fill="#5a5a5a"/><rect x="389.50" y="22.25" width="20.4" height="4.35" fill="#5a5a5a"/><rect x="411.10" y="1.0" width="20.4" height="5.0" fill="#12d812"/><rect x="411.10" y="6.80" width="20.4" height="4.35" fill="#5a5a5a"/><rect x="411.10" y="11.95" width="20.4" height="4.35" fill="#5a5a5a"/><rect x="411.10" y="17.10" width="20.4" height="4.35" fill="#5a5a5a"/><rect x="411.10" y="22.25" width="20.4" height="4.35" fill="#5a5a5a"/><rect x="432.70" y="1.0" width="20.4" height="5.0" fill="#12d812"/><rect x="432.70" y="6.80" width="20.4" height="4.35" fill="#5a5a5a"/><rect x="432.70" y="11.95" width="20.4" height="4.35" fill="#5a5a5a"/><rect x="432.70" y="17.10" width="20.4" height="4.35" fill="#5a5a5a"/><rect x="432.70" y="22.25" width="20.4" height="4.35" fill="#5a5a5a"/><rect x="454.30" y="1.0" width="20.4" height="5.0" fill="#12d812"/><rect x="454.30" y="6.80" width="20.4" height="4.35" fill="#5a5a5a"/><rect x="454.30" y="11.95" width="20.4" height="4.35" fill="#5a5a5a"/><rect x="454.30" y="17.10" width="20.4" height="4.35" fill="#5a5a5a"/><rect x="454.30" y="22.25" width="20.4" height="4.35" fill="#5a5a5a"/><rect x="475.90" y="1.0" width="20.4" height="5.0" fill="#12d812"/><rect x="475.90" y="6.80" width="20.4" height="4.35" fill="#5a5a5a"/><rect x="475.90" y="11.95" width="20.4" height="4.35" fill="#5a5a5a"/><rect x="475.90" y="17.10" width="20.4" height="4.35" fill="#5a5a5a"/><rect x="475.90" y="22.25" width="20.4" height="4.35" fill="#5a5a5a"/><rect x="497.50" y="1.0" width="20.4" height="5.0" fill="#12d812"/><rect x="497.50" y="6.80" width="20.4" height="4.35" fill="#5a5a5a"/><rect x="497.50" y="11.95" width="20.4" height="4.35" fill="#5a5a5a"/><rect x="497.50" y="17.10" width="20.4" height="4.35" fill="#5a5a5a"/><rect x="497.50" y="22.25" width="20.4" height="4.35" fill="#5a5a5a"/></svg>
<svg style="left:1255.00px;top:667.30px" width="30" height="28" viewBox="0 0 30 28"><path d="M14.2 10.6 L19.4 4.6" stroke="#f4f4f4" stroke-width="3.4" stroke-linecap="round"/><path d="M14.9 9.8 L18.7 5.4" stroke="#151515" stroke-width="1.0" stroke-linecap="round"/><rect x="6.2" y="9.8" width="16.6" height="3.8" rx="1.3" fill="#151515" stroke="#f4f4f4" stroke-width="1.5"/><path d="M7.6 13.6 V20.4 Q7.6 21.9 9.1 21.9 H19.9 Q21.4 21.9 21.4 20.4 V13.6" fill="#151515" stroke="#f4f4f4" stroke-width="1.6"/><path d="M7.6 14.7 H21.4" stroke="#f4f4f4" stroke-width="1.3"/><path d="M11.1 15 V21.2 M14.5 15 V21.2 M17.9 15 V21.2" stroke="#f4f4f4" stroke-width="1.5"/></svg>
<div class="abs" style="left:645.30px;top:699.96px;width:656.00px;height:1.30px;background:#7c808a;"></div>
<div class="abs" style="left:1242.00px;top:699.96px;width:1.30px;height:34.30px;background:#7c808a;"></div>
<svg style="left:647.80px;top:709.76px" width="13" height="13" viewBox="0 0 13 13"><rect x="0.85" y="0.85" width="11.30" height="11.30" rx="2.2" fill="none" stroke="#f0f0f0" stroke-width="1.7"/></svg>
<div class="t" style="left:665.30px;top:711.59px;font-size:9.30px;color:#d0d0d0;font-weight:normal;transform:scale(1.0,1.1);transform-origin:0 7.87px;">Sob.</div>
<svg style="left:716.20px;top:706.00px" width="519" height="28" viewBox="0 0 519 28"><rect x="0" y="0" width="519" height="28" fill="#2a2a2c"/><rect x="0.70" y="1.0" width="20.4" height="5.0" fill="#12d812"/><rect x="0.70" y="6.80" width="20.4" height="4.35" fill="#5a5a5a"/><rect x="0.70" y="11.95" width="20.4" height="4.35" fill="#5a5a5a"/><rect x="0.70" y="17.10" width="20.4" height="4.35" fill="#5a5a5a"/><rect x="0.70" y="22.25" width="20.4" height="4.35" fill="#5a5a5a"/><rect x="22.30" y="1.0" width="20.4" height="5.0" fill="#12d812"/><rect x="22.30" y="6.80" width="20.4" height="4.35" fill="#5a5a5a"/><rect x="22.30" y="11.95" width="20.4" height="4.35" fill="#5a5a5a"/><rect x="22.30" y="17.10" width="20.4" height="4.35" fill="#5a5a5a"/><rect x="22.30" y="22.25" width="20.4" height="4.35" fill="#5a5a5a"/><rect x="43.90" y="1.0" width="20.4" height="5.0" fill="#12d812"/><rect x="43.90" y="6.80" width="20.4" height="4.35" fill="#5a5a5a"/><rect x="43.90" y="11.95" width="20.4" height="4.35" fill="#5a5a5a"/><rect x="43.90" y="17.10" width="20.4" height="4.35" fill="#5a5a5a"/><rect x="43.90" y="22.25" width="20.4" height="4.35" fill="#5a5a5a"/><rect x="65.50" y="1.0" width="20.4" height="5.0" fill="#12d812"/><rect x="65.50" y="6.80" width="20.4" height="4.35" fill="#5a5a5a"/><rect x="65.50" y="11.95" width="20.4" height="4.35" fill="#5a5a5a"/><rect x="65.50" y="17.10" width="20.4" height="4.35" fill="#5a5a5a"/><rect x="65.50" y="22.25" width="20.4" height="4.35" fill="#5a5a5a"/><rect x="87.10" y="1.0" width="20.4" height="5.0" fill="#12d812"/><rect x="87.10" y="6.80" width="20.4" height="4.35" fill="#5a5a5a"/><rect x="87.10" y="11.95" width="20.4" height="4.35" fill="#5a5a5a"/><rect x="87.10" y="17.10" width="20.4" height="4.35" fill="#5a5a5a"/><rect x="87.10" y="22.25" width="20.4" height="4.35" fill="#5a5a5a"/><rect x="108.70" y="1.0" width="20.4" height="5.0" fill="#12d812"/><rect x="108.70" y="6.80" width="20.4" height="4.35" fill="#5a5a5a"/><rect x="108.70" y="11.95" width="20.4" height="4.35" fill="#5a5a5a"/><rect x="108.70" y="17.10" width="20.4" height="4.35" fill="#5a5a5a"/><rect x="108.70" y="22.25" width="20.4" height="4.35" fill="#5a5a5a"/><rect x="130.30" y="1.0" width="20.4" height="5.0" fill="#12d812"/><rect x="130.30" y="6.80" width="20.4" height="4.35" fill="#5a5a5a"/><rect x="130.30" y="11.95" width="20.4" height="4.35" fill="#5a5a5a"/><rect x="130.30" y="17.10" width="20.4" height="4.35" fill="#5a5a5a"/><rect x="130.30" y="22.25" width="20.4" height="4.35" fill="#5a5a5a"/><rect x="151.90" y="1.0" width="20.4" height="5.0" fill="#12d812"/><rect x="151.90" y="6.80" width="20.4" height="4.35" fill="#5a5a5a"/><rect x="151.90" y="11.95" width="20.4" height="4.35" fill="#5a5a5a"/><rect x="151.90" y="17.10" width="20.4" height="4.35" fill="#5a5a5a"/><rect x="151.90" y="22.25" width="20.4" height="4.35" fill="#5a5a5a"/><rect x="173.50" y="1.0" width="20.4" height="5.0" fill="#12d812"/><rect x="173.50" y="6.80" width="20.4" height="4.35" fill="#5a5a5a"/><rect x="173.50" y="11.95" width="20.4" height="4.35" fill="#5a5a5a"/><rect x="173.50" y="17.10" width="20.4" height="4.35" fill="#5a5a5a"/><rect x="173.50" y="22.25" width="20.4" height="4.35" fill="#5a5a5a"/><rect x="195.10" y="1.0" width="20.4" height="5.0" fill="#12d812"/><rect x="195.10" y="6.80" width="20.4" height="4.35" fill="#5a5a5a"/><rect x="195.10" y="11.95" width="20.4" height="4.35" fill="#5a5a5a"/><rect x="195.10" y="17.10" width="20.4" height="4.35" fill="#5a5a5a"/><rect x="195.10" y="22.25" width="20.4" height="4.35" fill="#5a5a5a"/><rect x="216.70" y="1.0" width="20.4" height="5.0" fill="#12d812"/><rect x="216.70" y="6.80" width="20.4" height="4.35" fill="#5a5a5a"/><rect x="216.70" y="11.95" width="20.4" height="4.35" fill="#5a5a5a"/><rect x="216.70" y="17.10" width="20.4" height="4.35" fill="#5a5a5a"/><rect x="216.70" y="22.25" width="20.4" height="4.35" fill="#5a5a5a"/><rect x="238.30" y="1.0" width="20.4" height="5.0" fill="#12d812"/><rect x="238.30" y="6.80" width="20.4" height="4.35" fill="#5a5a5a"/><rect x="238.30" y="11.95" width="20.4" height="4.35" fill="#5a5a5a"/><rect x="238.30" y="17.10" width="20.4" height="4.35" fill="#5a5a5a"/><rect x="238.30" y="22.25" width="20.4" height="4.35" fill="#5a5a5a"/><rect x="259.90" y="1.0" width="20.4" height="5.0" fill="#12d812"/><rect x="259.90" y="6.80" width="20.4" height="4.35" fill="#5a5a5a"/><rect x="259.90" y="11.95" width="20.4" height="4.35" fill="#5a5a5a"/><rect x="259.90" y="17.10" width="20.4" height="4.35" fill="#5a5a5a"/><rect x="259.90" y="22.25" width="20.4" height="4.35" fill="#5a5a5a"/><rect x="281.50" y="1.0" width="20.4" height="5.0" fill="#12d812"/><rect x="281.50" y="6.80" width="20.4" height="4.35" fill="#5a5a5a"/><rect x="281.50" y="11.95" width="20.4" height="4.35" fill="#5a5a5a"/><rect x="281.50" y="17.10" width="20.4" height="4.35" fill="#5a5a5a"/><rect x="281.50" y="22.25" width="20.4" height="4.35" fill="#5a5a5a"/><rect x="303.10" y="1.0" width="20.4" height="5.0" fill="#12d812"/><rect x="303.10" y="6.80" width="20.4" height="4.35" fill="#5a5a5a"/><rect x="303.10" y="11.95" width="20.4" height="4.35" fill="#5a5a5a"/><rect x="303.10" y="17.10" width="20.4" height="4.35" fill="#5a5a5a"/><rect x="303.10" y="22.25" width="20.4" height="4.35" fill="#5a5a5a"/><rect x="324.70" y="1.0" width="20.4" height="5.0" fill="#12d812"/><rect x="324.70" y="6.80" width="20.4" height="4.35" fill="#5a5a5a"/><rect x="324.70" y="11.95" width="20.4" height="4.35" fill="#5a5a5a"/><rect x="324.70" y="17.10" width="20.4" height="4.35" fill="#5a5a5a"/><rect x="324.70" y="22.25" width="20.4" height="4.35" fill="#5a5a5a"/><rect x="346.30" y="1.0" width="20.4" height="5.0" fill="#12d812"/><rect x="346.30" y="6.80" width="20.4" height="4.35" fill="#5a5a5a"/><rect x="346.30" y="11.95" width="20.4" height="4.35" fill="#5a5a5a"/><rect x="346.30" y="17.10" width="20.4" height="4.35" fill="#5a5a5a"/><rect x="346.30" y="22.25" width="20.4" height="4.35" fill="#5a5a5a"/><rect x="367.90" y="1.0" width="20.4" height="5.0" fill="#12d812"/><rect x="367.90" y="6.80" width="20.4" height="4.35" fill="#5a5a5a"/><rect x="367.90" y="11.95" width="20.4" height="4.35" fill="#5a5a5a"/><rect x="367.90" y="17.10" width="20.4" height="4.35" fill="#5a5a5a"/><rect x="367.90" y="22.25" width="20.4" height="4.35" fill="#5a5a5a"/><rect x="389.50" y="1.0" width="20.4" height="5.0" fill="#12d812"/><rect x="389.50" y="6.80" width="20.4" height="4.35" fill="#5a5a5a"/><rect x="389.50" y="11.95" width="20.4" height="4.35" fill="#5a5a5a"/><rect x="389.50" y="17.10" width="20.4" height="4.35" fill="#5a5a5a"/><rect x="389.50" y="22.25" width="20.4" height="4.35" fill="#5a5a5a"/><rect x="411.10" y="1.0" width="20.4" height="5.0" fill="#12d812"/><rect x="411.10" y="6.80" width="20.4" height="4.35" fill="#5a5a5a"/><rect x="411.10" y="11.95" width="20.4" height="4.35" fill="#5a5a5a"/><rect x="411.10" y="17.10" width="20.4" height="4.35" fill="#5a5a5a"/><rect x="411.10" y="22.25" width="20.4" height="4.35" fill="#5a5a5a"/><rect x="432.70" y="1.0" width="20.4" height="5.0" fill="#12d812"/><rect x="432.70" y="6.80" width="20.4" height="4.35" fill="#5a5a5a"/><rect x="432.70" y="11.95" width="20.4" height="4.35" fill="#5a5a5a"/><rect x="432.70" y="17.10" width="20.4" height="4.35" fill="#5a5a5a"/><rect x="432.70" y="22.25" width="20.4" height="4.35" fill="#5a5a5a"/><rect x="454.30" y="1.0" width="20.4" height="5.0" fill="#12d812"/><rect x="454.30" y="6.80" width="20.4" height="4.35" fill="#5a5a5a"/><rect x="454.30" y="11.95" width="20.4" height="4.35" fill="#5a5a5a"/><rect x="454.30" y="17.10" width="20.4" height="4.35" fill="#5a5a5a"/><rect x="454.30" y="22.25" width="20.4" height="4.35" fill="#5a5a5a"/><rect x="475.90" y="1.0" width="20.4" height="5.0" fill="#12d812"/><rect x="475.90" y="6.80" width="20.4" height="4.35" fill="#5a5a5a"/><rect x="475.90" y="11.95" width="20.4" height="4.35" fill="#5a5a5a"/><rect x="475.90" y="17.10" width="20.4" height="4.35" fill="#5a5a5a"/><rect x="475.90" y="22.25" width="20.4" height="4.35" fill="#5a5a5a"/><rect x="497.50" y="1.0" width="20.4" height="5.0" fill="#12d812"/><rect x="497.50" y="6.80" width="20.4" height="4.35" fill="#5a5a5a"/><rect x="497.50" y="11.95" width="20.4" height="4.35" fill="#5a5a5a"/><rect x="497.50" y="17.10" width="20.4" height="4.35" fill="#5a5a5a"/><rect x="497.50" y="22.25" width="20.4" height="4.35" fill="#5a5a5a"/></svg>
<svg style="left:1255.00px;top:701.56px" width="30" height="28" viewBox="0 0 30 28"><path d="M14.2 10.6 L19.4 4.6" stroke="#f4f4f4" stroke-width="3.4" stroke-linecap="round"/><path d="M14.9 9.8 L18.7 5.4" stroke="#151515" stroke-width="1.0" stroke-linecap="round"/><rect x="6.2" y="9.8" width="16.6" height="3.8" rx="1.3" fill="#151515" stroke="#f4f4f4" stroke-width="1.5"/><path d="M7.6 13.6 V20.4 Q7.6 21.9 9.1 21.9 H19.9 Q21.4 21.9 21.4 20.4 V13.6" fill="#151515" stroke="#f4f4f4" stroke-width="1.6"/><path d="M7.6 14.7 H21.4" stroke="#f4f4f4" stroke-width="1.3"/><path d="M11.1 15 V21.2 M14.5 15 V21.2 M17.9 15 V21.2" stroke="#f4f4f4" stroke-width="1.5"/></svg>
<div class="abs" style="left:645.30px;top:733.60px;width:656.00px;height:1.40px;background:#7c808a;"></div>
<div class="abs" style="left:646.00px;top:745.50px;width:10.40px;height:10.20px;background:#22d022;border-radius:2px"></div>
<div class="t" style="left:658.30px;top:747.61px;font-size:8.97px;color:#e0141c;font-weight:normal;transform:scale(1.0,1.08);transform-origin:0 7.59px;">Zwykły</div>
<div class="abs" style="left:722.00px;top:745.50px;width:10.40px;height:10.20px;background:#ffdf22;border-radius:2px"></div>
<div class="t" style="left:734.30px;top:747.73px;font-size:8.82px;color:#f0f0f0;font-weight:normal;transform:scale(1.0,1.08);transform-origin:0 7.47px;">Ruch</div>
<div class="abs" style="left:798.40px;top:745.50px;width:10.40px;height:10.20px;background:#e8401c;border-radius:2px"></div>
<div class="t" style="left:810.70px;top:748.00px;font-size:8.50px;color:#66666c;font-weight:normal;transform:scale(1.0,1.08);transform-origin:0 7.20px;">Alarm</div>
<div class="abs" style="left:874.50px;top:745.50px;width:10.40px;height:10.20px;background:#1ad8e8;border-radius:2px"></div>
<div class="t" style="left:886.80px;top:748.05px;font-size:8.44px;color:#66666c;font-weight:normal;transform:scale(1.0,1.08);transform-origin:0 7.15px;">M&amp;A</div>
<div class="abs" style="left:963.60px;top:745.50px;width:10.40px;height:10.20px;background:#709ef2;border-radius:2px"></div>
<div class="t" style="left:975.90px;top:747.39px;font-size:9.23px;color:#dcdcdc;font-weight:normal;transform:scale(1.0,1.08);transform-origin:0 7.81px;">Inteligentny</div>
<svg style="left:646.00px;top:745.50px" width="11" height="10" viewBox="0 0 11 10"><path d="M2.3 5 L4.5 7.3 L8.7 2.5" fill="none" stroke="#111" stroke-width="1.2"/></svg>
<div class="abs" style="left:1196.20px;top:739.90px;width:88.00px;height:21.70px;background:#262628;border-radius:3px"></div>
<div class="t" style="left:1227.05px;top:746.69px;font-size:9.46px;color:#f4f4f4;font-weight:normal;transform:scale(1.0,1.1);transform-origin:0 8.01px;text-shadow:0 0 0.5px #fff">Edytuj</div>
<div class="abs" style="left:1005.30px;top:842.70px;width:88.00px;height:24.50px;background:#262628;border-radius:3px"></div>
<div class="t" style="left:1028.95px;top:850.95px;font-size:9.16px;color:#f4f4f4;font-weight:normal;transform:scale(1.0,1.1);transform-origin:0 7.75px;text-shadow:0 0 0.5px #fff">Domyślne</div>
<div class="abs" style="left:1100.90px;top:842.70px;width:88.00px;height:24.50px;background:#262628;border-radius:3px"></div>
<div class="t" style="left:1131.95px;top:850.81px;font-size:9.32px;color:#f4f4f4;font-weight:normal;transform:scale(1.0,1.1);transform-origin:0 7.89px;text-shadow:0 0 0.5px #fff">Kopiuj</div>
<div class="abs" style="left:1196.20px;top:842.70px;width:88.00px;height:24.50px;background:#262628;border-radius:3px"></div>
<div class="t" style="left:1221.35px;top:850.26px;font-size:9.98px;color:#a0a0a0;font-weight:normal;transform:scale(1.0,1.1);transform-origin:0 8.44px;">Zastosuj</div>
</body></html>
